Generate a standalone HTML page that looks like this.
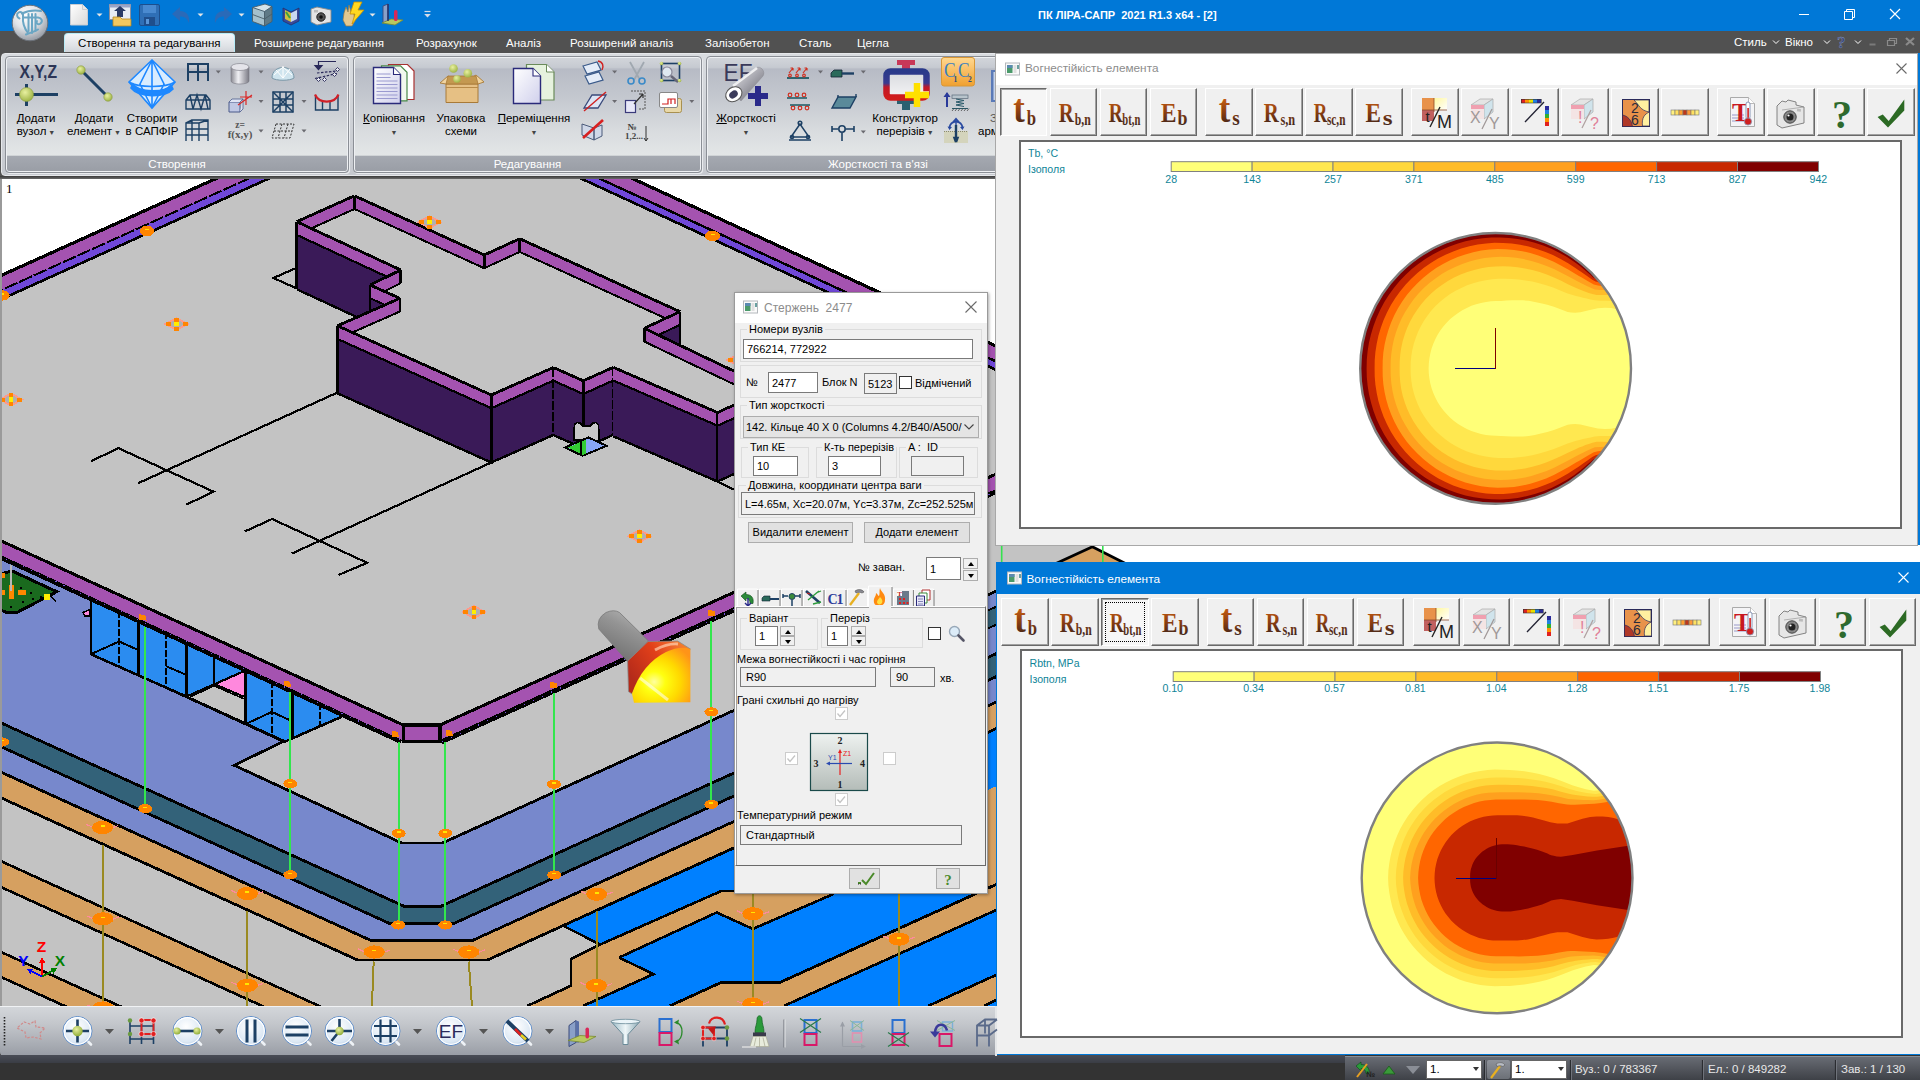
<!DOCTYPE html>
<html lang="uk"><head><meta charset="utf-8"><title>ПК ЛІРА-САПР 2021</title>
<style>
*{box-sizing:border-box;margin:0;padding:0}
html,body{width:1920px;height:1080px;overflow:hidden;background:#333;font-family:"Liberation Sans",sans-serif;font-size:11px;color:#000}
.a{position:absolute}
.t{position:absolute;white-space:pre;line-height:1}
#title{left:0;top:0;width:1920px;height:31px;background:#0078d7}
#tabs{left:0;top:31px;width:1920px;height:22px;background:#515151}
#tabs .t{color:#fff;font-size:11.5px;top:7px}
#ribbon{left:0;top:52px;width:1920px;height:127px;background:#515151}
.grp{position:absolute;top:4px;height:117px;border-radius:4px;border:1px solid #8b8f96;box-shadow:0 0 0 1px #eef0f3 inset, 1px 1px 0 #e9ebee;background:linear-gradient(#d3d6db 0,#c6cad1 9%,#b7bbc5 10.5%,#c4c8cf 35%,#d9dcdf 65%,#e3e6e7 85.5%,#a5a9b1 86%,#999da5 100%)}
.grp .gl{position:absolute;left:0;right:0;bottom:-1px;height:17px;color:#fff;font-size:11.5px;text-align:center;line-height:17px;white-space:pre}
.rl{position:absolute;font-size:11.5px;text-align:center;white-space:pre;line-height:13px;color:#000;transform:translateX(-50%)}
.edit{position:absolute;background:#fff;border:1px solid #7a7a7a;font-size:11px;line-height:1;white-space:pre;padding:0}
.edit span,.ro span{position:absolute;left:3px;top:50%;transform:translateY(-50%)}
.ro{position:absolute;background:#f0f0f0;border:1px solid #7a7a7a;font-size:11px;white-space:pre}
.gb{position:absolute;border:1px solid #dcdcdc}
.gb>b{position:absolute;top:-7px;left:6px;background:#f0f0f0;padding:0 2px;font-weight:normal;font-size:11px;white-space:pre;line-height:13px}
.btn{position:absolute;background:#e1e1e1;border:1px solid #adadad;font-size:11px;text-align:center;white-space:pre}
.cb{position:absolute;width:13px;height:13px;background:#fff;border:1px solid #333}
.cbd{position:absolute;width:13px;height:13px;background:#fff;border:1px solid #ccc}
.spin{position:absolute;width:15px;height:10.5px;background:#f0f0f0;border:1px solid #adadad}
.spin:after{content:"";position:absolute;left:3.5px;top:2.5px;border:3px solid transparent}
.spin.u:after{border-bottom:4px solid #000;border-top:0}
.spin.d:after{border-top:4px solid #000;border-bottom:0}
.tb{position:absolute;width:47.5px;height:48px;background:#f0f0f0;border:1px solid;border-color:#fff #696969 #696969 #fff;box-shadow:inset -1px -1px 0 #a0a0a0}
.tb.p{border-color:#696969 #fff #fff #696969;box-shadow:inset 1px 1px 0 #a0a0a0;background:#f6f6f6}
.tb svg{position:absolute;left:0;top:0}
.win{position:absolute;background:#f0f0f0}
.canvas{position:absolute;background:#fff;border:2px solid #696969;border-right-color:#696969}
.lg{position:absolute;font-size:10.6px;color:#0f8598;white-space:pre;line-height:1}
.lv{position:absolute;font-size:10.6px;color:#0f8598;white-space:pre;line-height:1;transform:translateX(-50%)}
#btb{left:0;top:1007px;width:996px;height:49px;background:linear-gradient(#d3d6da 0,#c3c6cb 35%,#a9adb4 75%,#999da5 100%);border-radius:0 0 0 4px}
#status{left:1345px;top:1056px;width:575px;height:24px;background:linear-gradient(#6a6e76 0,#54575e 50%,#3e4147 100%)}
#status .t{color:#e8e8e8;font-size:11.5px;top:8px}
</style></head><body>
<!-- ===== title bar ===== -->
<div id="title" class="a">
 <div class="t" style="left:1038px;top:9.5px;color:#fff;font-weight:bold;font-size:11px">ПК ЛІРА-САПР  2021 R1.3 x64 - [2]</div>
 <svg class="a" style="left:60px;top:0" width="400" height="31" viewBox="60 0 400 31">
  <defs>
   <linearGradient id="gDoc" x1="0" y1="0" x2="1" y2="1"><stop offset="0" stop-color="#fff"/><stop offset="1" stop-color="#d8d8d8"/></linearGradient>
   <linearGradient id="gBl" x1="0" y1="0" x2="0" y2="1"><stop offset="0" stop-color="#3a80c8"/><stop offset="1" stop-color="#1a5aa8"/></linearGradient>
  </defs>
  <!-- new doc -->
  <path d="M70.5 4.5h12l5 5v15.5h-17z" fill="url(#gDoc)" stroke="#c8ccd2" stroke-width="1"/><path d="M82.5 4.5v5h5" fill="#e8e8e8" stroke="#c0c4ca" stroke-width=".8"/>
  <path d="M96.5 13.5l3 3 3-3z" fill="#e6e6e6"/>
  <!-- open -->
  <rect x="109.500" y="4.500" width="21" height="15" fill="#e8ecf4" stroke="#8a90a0"/><rect x="109.500" y="4.500" width="21" height="3" fill="#9aa4c8"/>
  <path d="M117 17v-6h-3l6-5 6 5h-3v6z" fill="#2a3a66"/>
  <path d="M113 26v-9h7l2 2h9v7z" fill="#f2c860" stroke="#b88820" stroke-width=".8"/>
  <!-- save -->
  <rect x="139.500" y="4.500" width="20" height="21" rx="1.5" fill="#2f6fb6" stroke="#1c4f8e"/><rect x="143" y="5" width="13" height="8" fill="#4a8ad0"/><rect x="144" y="17" width="11" height="8" fill="#1f4e8c"/><rect x="146" y="19" width="3" height="5" fill="#5a96d8"/>
  <!-- undo / redo (dim blue) -->
  <path d="M172 14l8-7v4c7 0 10 5 9 12-2-5-5-7-9-6.5v4.500z" fill="#2a6ab8"/>
  <path d="M197.500 13.500l3 3 3-3z" fill="#e6e6e6"/>
  <path d="M232 14l-8-7v4c-7 0-10 5-9 12 2-5 5-7 9-6.500v4.500z" fill="#2a6ab8"/>
  <path d="M238.500 13.500l3 3 3-3z" fill="#e6e6e6"/>
  <!-- 3d box -->
  <path d="M252.500 7.500l12 4v14.500l-12-4.500z" fill="#a4c0cc"/><path d="M264.500 11.500l7.500-5v15l-7.500 4.500z" fill="#5f7a86"/><path d="M252.500 7.500l12.500-3.500 7 2.500-7.500 5z" fill="#d4e4ea"/><path d="M252.500 7.500l12.500-3.500 7 2.500v15l-7.500 4.500-12-4.500zM252.500 7.500l12 4 7.500-5M264.500 11.500v14.500M252.500 14.500l12 4.500 7.500-5" fill="none" stroke="#4a5e68" stroke-width=".9"/>
  <!-- book -->
  <path d="M283 8l8 4 8-4v13l-8 4-8-4z" fill="#3a4a9a" stroke="#26306a" stroke-width=".8"/><path d="M285 10l6 3v9l-6-3z" fill="#d0c040"/><path d="M297 10l-6 3v9l6-3z" fill="#c8d8f0"/><path d="M286 12l4 6" stroke="#40a040" stroke-width="2"/>
  <!-- camera -->
  <path d="M311 9l6-2 14 3v12l-14 3-6-3z" fill="#e4e4e4" stroke="#888" stroke-width=".9"/><circle cx="321" cy="17" r="4.200" fill="#555" stroke="#222"/><circle cx="321" cy="17" r="1.800" fill="#111"/><rect x="314" y="10" width="4" height="2.500" fill="#bbb"/>
  <!-- hand + lightning -->
  <path d="M344 13l2-6 2 5 1-7 2 7 2-5 1 8 1 6-3 5h-6l-3-6z" fill="#e2c890" stroke="#9a7a40" stroke-width=".7"/><path d="M354 2h8l-4 8h6l-12 14 3-10h-5z" fill="#ffd820" stroke="#c89000" stroke-width=".8"/>
  <path d="M369.500 13.500l3 3 3-3z" fill="#e6e6e6"/>
  <!-- section icon -->
  <path d="M383 6l5-2v17l-5 2z" fill="#8aa0c8" stroke="#3a4a7a" stroke-width=".9"/><path d="M382 23l9-4 12 1-8 5z" fill="#b8c860" stroke="#7a8a30" stroke-width=".8"/><rect x="394" y="10" width="3.500" height="11" rx="1.500" fill="#d82858"/><path d="M388 4v17" stroke="#26306a" stroke-width="1.500"/>
  <!-- customize -->
  <path d="M424.500 11.500h6" stroke="#d4dcea" stroke-width="1.200"/><path d="M424.200 14l3.300 3.600 3.300-3.600z" fill="#d4dcea"/>
 </svg>
 <!-- window controls -->
 <svg class="a" style="left:1780px;top:0" width="140" height="31"><g stroke="#fff" stroke-width="1" fill="none"><path d="M19 14.500h10"/><path d="M64.500 11.500h8v8h-8zM66.500 11.500v-2h8v8h-2"/><path d="M110 9l10 10M120 9l-10 10" stroke-width="1.200"/></g></svg>
</div>
<!-- ===== tab row ===== -->
<div id="tabs" class="a">
 <div class="a" style="left:64px;top:2px;width:171px;height:21px;border-radius:4px 4px 0 0;background:linear-gradient(#f4f6f8,#dfe2e6 60%,#cdd1d7);border:1px solid #b8ecf8;border-bottom:0"></div>
 <div class="t" style="left:78px;color:#000">Створення та редагування</div>
 <div class="t" style="left:254px">Розширене редагування</div>
 <div class="t" style="left:416px">Розрахунок</div>
 <div class="t" style="left:506px">Аналіз</div>
 <div class="t" style="left:570px">Розширений аналіз</div>
 <div class="t" style="left:705px">Залізобетон</div>
 <div class="t" style="left:799px">Сталь</div>
 <div class="t" style="left:857px">Цегла</div>
 <div class="t" style="left:1734px;top:6px">Стиль</div>
 <div class="t" style="left:1785px;top:6px">Вікно</div>
 <svg class="a" style="left:1768px;top:0" width="152" height="22"><g stroke="#fff" stroke-width="1" fill="none"><path d="M5 9.500l3 3 3-3M56 9.500l3 3 3-3M87 9.500l3 3 3-3"/></g>
  <text x="69" y="17" font-family="Liberation Serif,serif" font-weight="bold" font-size="17" fill="#3a4a7a" stroke="#8a98c0" stroke-width=".4">?</text>
  <path d="M101.500 13.500h6" stroke="#7a7a7a" stroke-width="2"/><path d="M119.500 9.500h7v5h-7zM121.500 9.500v-2h7v5h-2" stroke="#8a8a8a" stroke-width="1.200" fill="none"/><path d="M138 7l8 7M146 7l-8 7" stroke="#8a8a8a" stroke-width="2.200"/></svg>
</div>
<!-- app button -->
<svg class="a" style="left:8px;top:1px" width="46" height="46" viewBox="0 0 46 46">
 <defs><radialGradient id="gApp" cx=".4" cy=".3" r=".8"><stop offset="0" stop-color="#fff"/><stop offset=".45" stop-color="#dfe3e8"/><stop offset="1" stop-color="#848a94"/></radialGradient></defs>
 <circle cx="22" cy="22" r="17.800" fill="url(#gApp)" stroke="#6a7078" stroke-width="1"/>
 <g fill="none" stroke="#6aa6c4" stroke-width="2" stroke-linecap="round">
  <path d="M11.500 17.500c-2.500-1-3.500-4.500-1-6s5 .5 4.500 4c-.5 5 1.500 12 5 16.500"/>
  <path d="M14 12.500c4-2 12-3.500 19-2.500"/>
  <path d="M16.500 16.500h13.500c4 .5 5 4 2.500 6s-5-.5-3.500-2.500"/>
  <path d="M20.500 13v17M24 13v19M27.500 13v17"/>
  <path d="M18 33.500c3-1.500 8-2.500 12-5"/>
 </g>
</svg>
<!-- ===== ribbon ===== -->
<div id="ribbon" class="a">
<div class="a" style="left:1px;top:1px;width:1917px;height:123px;border-radius:4px;background:linear-gradient(#d9dce0,#c6c9cf);border:1px solid #e6e8eb"></div>
<!-- group 1 -->
<div class="grp" style="left:5px;width:344px"><div class="gl">Створення</div></div>
<div class="grp" style="left:353px;width:349px"><div class="gl">Редагування</div></div>
<div class="grp" style="left:706px;width:460px"><div class="gl" style="text-align:left;padding-left:121px">Жорсткості та в'язі</div></div>
<div class="rl" style="left:36px;top:60px">Додати
вузол<span style="font-size:7px;color:#444"> ▼</span></div>
<div class="rl" style="left:94px;top:60px">Додати
елемент<span style="font-size:7px;color:#444"> ▼</span></div>
<div class="rl" style="left:152px;top:60px">Створити
в САПФІР</div>
<div class="rl" style="left:394px;top:60px"><u>К</u>опіювання
<span style="font-size:7px;color:#444">▼</span></div>
<div class="rl" style="left:461px;top:60px">Упаковка
схеми</div>
<div class="rl" style="left:534px;top:60px"><u>П</u>ереміщення
<span style="font-size:7px;color:#444">▼</span></div>
<div class="rl" style="left:746px;top:60px"><u>Ж</u>орсткості
<span style="font-size:7px;color:#444">▼</span></div>
<div class="rl" style="left:905px;top:60px">Конструктор
перерізів<span style="font-size:7px;color:#444"> ▼</span></div>
<div class="t" style="left:990px;top:61px;font-size:11.5px;color:#555">З</div><div class="t" style="left:978px;top:74px;font-size:11.5px">арм</div>
<svg class="a" style="left:0;top:0" width="1000" height="127" viewBox="0 52 1000 127">
<defs>
 <radialGradient id="gGn" cx=".4" cy=".35" r=".7"><stop offset="0" stop-color="#e8f0a0"/><stop offset="1" stop-color="#9ab040"/></radialGradient>
 <linearGradient id="gCyl" x1="0" y1="0" x2="1" y2="0"><stop offset="0" stop-color="#8a8a92"/><stop offset=".4" stop-color="#f0f0f4"/><stop offset="1" stop-color="#7a7a84"/></linearGradient>
 <linearGradient id="gPap" x1="0" y1="0" x2="1" y2="1"><stop offset="0" stop-color="#fff"/><stop offset="1" stop-color="#d0d0ec"/></linearGradient>
 <linearGradient id="gPipe" x1="0" y1="0" x2="1" y2="1"><stop offset="0" stop-color="#f4f4f4"/><stop offset=".5" stop-color="#a8a8b0"/><stop offset="1" stop-color="#606068"/></linearGradient>
 <linearGradient id="gCC" x1="0" y1="0" x2="0" y2="1"><stop offset="0" stop-color="#ffd890"/><stop offset="1" stop-color="#f0a030"/></linearGradient>
</defs>
<g fill="#6a6a70"><path d="M215.8 70.5l2.5 3 2.5-3z"/><path d="M258.5 70.5l2.5 3 2.5-3z"/><path d="M258.5 100.0l2.5 3 2.5-3z"/><path d="M301.5 100.0l2.5 3 2.5-3z"/><path d="M258.5 129.5l2.5 3 2.5-3z"/><path d="M301.5 129.5l2.5 3 2.5-3z"/></g>
<!-- Add node -->
<text x="19.500" y="77.500" font-size="18" font-weight="bold" fill="#2c3556" font-family="Liberation Sans,sans-serif" textLength="37.500" lengthAdjust="spacingAndGlyphs">X,Y,Z</text>
<path d="M15 94.500h43M26.500 84v22" stroke="#1d4064" stroke-width="3"/><circle cx="26.500" cy="94.500" r="7" fill="url(#gGn)" stroke="#8a9a40" stroke-width=".6"/>
<!-- Add element -->
<path d="M81 70l27 27" stroke="#1d4064" stroke-width="3"/><circle cx="81" cy="70" r="4.200" fill="url(#gGn)" stroke="#8a9a40" stroke-width=".6"/><circle cx="108" cy="97" r="4.200" fill="url(#gGn)" stroke="#8a9a40" stroke-width=".6"/>
<!-- Sapfir diamond -->
<g stroke="#1e88ff" stroke-width="1.600" fill="none"><path d="M152 60l-23 22 23 26 23-26z" fill="#d8ecff"/><path d="M152 60l-12 24 12 24M152 60l12 24-12 24M152 60v48M129 82c10 6 36 6 46 0M133 86c8 8 30 8 38 0" /><path d="M133 84c6 9 32 9 38 1l2 4c-8 9-34 9-42-1z" fill="#1e88ff"/></g>
<!-- col 1 small -->
<g stroke="#1d4064" stroke-width="2" fill="none"><path d="M188 81v-17h20v17M188 72h20M198 64v17"/></g>
<g stroke="#1d4064" stroke-width="1.400" fill="none"><path d="M186 109v-9l4-5h16l4 5v9zM186 100h24M190 95l3 14 4-14 4 14 4-14 3 14"/></g>
<g stroke="#1d4064" stroke-width="1.400" fill="none"><path d="M186 141v-18h13v18M192 141v-21h16v21M186 129h22M186 135h22M199 123l9-3M186 123l6-3"/></g>
<!-- col 2 -->
<path d="M231 67v14c0 4 18 4 18 0v-14" fill="url(#gCyl)" stroke="#7a7a84" stroke-width=".6"/><ellipse cx="240" cy="67" rx="9" ry="3.500" fill="#e4e4ea" stroke="#7a7a84" stroke-width=".6"/>
<path d="M229 102h11v10h-11z" fill="#c0c8e4" stroke="#4a5a8a" stroke-width="1"/><path d="M229 102l3-3h11l-3 3M240 112l3-3v-10" fill="#e0e4f4" stroke="#4a5a8a" stroke-width=".8"/><path d="M246 91v14M240 97h12M238 105l14-10" stroke="#d82828" stroke-width="1.200"/>
<text x="240" y="128" font-family="Liberation Serif,serif" font-weight="bold" font-size="9.500" fill="#555" text-anchor="middle">z=</text><text x="240" y="138" font-family="Liberation Serif,serif" font-weight="bold" font-size="11" fill="#555" text-anchor="middle">f(x,y)</text>
<!-- col 3 -->
<path d="M272 78c0-14 22-14 22 0c-4 3-18 3-22 0z" fill="#cfe4ee" stroke="#7a98a8" stroke-width="1"/><path d="M276 70l7 8 7-9M283 66v12M274 75l9-8 9 8" stroke="#fff" stroke-width="1" fill="none"/>
<g stroke="#1d4064" stroke-width="1.500" fill="none"><rect x="273" y="92" width="20" height="20"/><path d="M273 99h20M273 105h20M280 92v20M286 92v20M273 92l20 20M293 92l-20 20"/></g>
<g stroke="#333" stroke-width="1" fill="none" stroke-dasharray="2 1.500"><path d="M276 124h18l-4 14h-18zM282 124l-4 14M288 124l-4 14M274 131h18"/></g>
<!-- col 4 -->
<g stroke="#2a2a5a" stroke-width="1.200" fill="none"><path d="M336 61.500h-17.500v6"/><path d="M315 65.500h7l-3.500 4z" fill="#2a2a5a"/><path d="M317 73l20-2M315 78.500l22-5" stroke-dasharray="2.500 1.500"/><path d="M316.500 79.500l2-2 2 2-2 2zM322.500 79.500l2-2 2 2-2 2zM332.500 74.500l2-2 2 2-2 2zM335.500 69.500l2-2 2 2-2 2z" fill="#e8eaf0" stroke-width=".9"/></g>
<path d="M315.500 96v14h22.500v-14M322.500 101v9M330 101v9" stroke="#1d4064" stroke-width="1.400" fill="none"/><path d="M315 94.500c4 9.500 19.500 9.500 23.500 0" stroke="#d02028" stroke-width="2.200" fill="none"/>
<!-- group 2: copy -->
<path d="M388.500 64.500h19l6.500 6.500v28.500h-25.500z" fill="#fff" stroke="#a83030" stroke-width="1.200"/><path d="M381.500 65.800h19l6.500 6.500v28.500h-25.500z" fill="#f2f8ee" stroke="#4a8a4a" stroke-width="1.200"/><path d="M373.500 67.500h20l7 7v29h-27z" fill="url(#gPap)" stroke="#2a2a7a" stroke-width="1.400"/><path d="M393.500 67.500v7h7" fill="#fff" stroke="#2a2a7a" stroke-width="1.100"/><path d="M376.500 74h14M376.500 77.500h14M376.500 81h21M376.500 84.500h21M376.500 88h21M376.500 91.500h21M376.500 95h21M376.500 98.500h21" stroke="#9a9ad0" stroke-width="1"/>
<!-- pack -->
<path d="M446 84h32v18.500h-32z" fill="#e6c084" stroke="#a87a38" stroke-width="1"/><path d="M446 84l-6-1 8-7 5 3zM478 84l6-2-8-7-5 3z" fill="#f0d4a0" stroke="#a87a38" stroke-width=".9"/><path d="M448 76h28l2 8h-32z" fill="#c49850" stroke="#a87a38" stroke-width=".8"/><path d="M446 87.500h32" stroke="#b88a48" stroke-width="1"/><circle cx="453.500" cy="68.500" r="4.300" fill="url(#gGn)"/><circle cx="467.800" cy="73.200" r="4.300" fill="url(#gGn)"/><circle cx="457" cy="79" r="3.800" fill="url(#gGn)"/>
<!-- move -->
<path d="M526.500 64.500h20l7.500 7.500v28h-27.500z" fill="#e6f2de" stroke="#6a8a5a" stroke-width="1.200"/><path d="M546.500 64.500v7.500h7.500" fill="#fff" stroke="#6a8a5a" stroke-width="1"/><path d="M513.500 68.500h19.500l7.500 7.500v27.500h-27z" fill="url(#gPap)" stroke="#2a2a7a" stroke-width="1.400"/><path d="M533 68.500v7.500h7.500" fill="#fff" stroke="#2a2a7a" stroke-width="1.100"/>
<!-- small icons group 2 -->
<g fill="#6a6a70"><path d="M612.1 70.5l2.5 3 2.5-3z"/><path d="M612.1 100.1l2.5 3 2.5-3z"/><path d="M689.3 100.1l2.5 3 2.5-3z"/></g>
<path d="M583 66l14-4 4 8-14 4zM585 76l14-4 4 8-14 4z" fill="#e4ecf8" stroke="#3a5a8a" stroke-width="1.200"/><path d="M598 61c5 1 6 5 4 9" stroke="#d02020" stroke-width="1.400" fill="none"/>
<path d="M584 108l8-13h14l-8 13z" fill="#dce4f4" stroke="#3a4a7a" stroke-width="1.300"/><path d="M584 111l22-19" stroke="#d02020" stroke-width="1.400"/>
<path d="M582 124l12 4v12l-12-5zM594 128l8-3v11l-8 4z" fill="#d0d8e8" stroke="#4a5a7a" stroke-width="1"/><path d="M583 138l20-18" stroke="#d82020" stroke-width="2.600"/>
<path d="M630 62l10 18M644 62l-10 18" stroke="#a0a8b0" stroke-width="1.800"/><circle cx="631" cy="81" r="3" fill="none" stroke="#3a8ac8" stroke-width="1.600"/><circle cx="642" cy="81" r="3" fill="none" stroke="#3a8ac8" stroke-width="1.600"/>
<rect x="625.500" y="100.500" width="10" height="12" fill="#e8e8f8" stroke="#3a3a7a" stroke-width="1.200"/><path d="M631 91h14v18h-7" fill="none" stroke="#555" stroke-width="1" stroke-dasharray="2 1"/><path d="M634 104l9-10M643 94h-4M643 94v4" stroke="#333" stroke-width="1.200" fill="none"/>
<text x="632" y="130" font-family="Liberation Serif,serif" font-weight="bold" font-size="9" fill="#444" text-anchor="middle">№</text><text x="634" y="139" font-family="Liberation Serif,serif" font-weight="bold" font-size="9" fill="#444" text-anchor="middle">1,2...</text><path d="M646 126v15l-2-3M646 141l2-3" stroke="#333" stroke-width="1" fill="none"/>
<rect x="661.500" y="63.500" width="18" height="17" fill="none" stroke="#1d4064" stroke-width="1.600"/><circle cx="667" cy="72" r="5" fill="#dfe8f0" stroke="#889" stroke-width="1.200"/><path d="M671 76l7 6" stroke="#667" stroke-width="2.400"/><g fill="url(#gGn)"><circle cx="661.500" cy="63.500" r="1.800"/><circle cx="679.500" cy="63.500" r="1.800"/><circle cx="661.500" cy="80.500" r="1.800"/><circle cx="679.500" cy="80.500" r="1.800"/></g>
<rect x="664.500" y="98.500" width="17" height="14" rx="2" fill="#e8d8a8" stroke="#a89050"/><rect x="659.500" y="92.500" width="18" height="15" rx="1.500" fill="#fff" stroke="#888"/><path d="M662 104h6v-5h7v5M671 99v5" stroke="#d02020" stroke-width="1.200" fill="none"/>
<!-- group 3 -->
<text x="723.500" y="81" font-size="24.500" fill="#3a3a5a" font-family="Liberation Sans,sans-serif" textLength="29" lengthAdjust="spacingAndGlyphs">EF</text>
<path d="M729 89l27-21c4-3 10 3 7 8l-22 25z" fill="url(#gPipe)" stroke="#8a8a92" stroke-width=".5"/><path d="M733 86l24-18" stroke="#fff" stroke-width="2.500" opacity=".8"/>
<ellipse cx="733.800" cy="94.200" rx="8.600" ry="7" fill="#fff" stroke="#555" stroke-width="1" transform="rotate(-35 733.800 94.200)"/><ellipse cx="733.500" cy="94.500" rx="4.600" ry="3.500" fill="#3a3a5a" transform="rotate(-35 733.500 94.500)"/>
<path d="M758 86v20M748 96h20" stroke="#2a2a8a" stroke-width="6"/>
<g fill="#6a6a70"><path d="M818.0 70.5l2.5 3 2.5-3z"/><path d="M860.8 70.5l2.5 3 2.5-3z"/><path d="M860.8 130.4l2.5 3 2.5-3z"/></g>
<path d="M787 78h22" stroke="#1d5a64" stroke-width="1.800"/><g stroke="#d03020" stroke-width="1.200" fill="none"><path d="M789 73l4-5M796 73l4-5M803 73l4-5M793 68h-2.500M793 68v2.500M800 68h-2.500M800 68v2.500M807 68h-2.500M807 68v2.500"/><circle cx="790" cy="75.500" r="1.300"/><circle cx="797" cy="75.500" r="1.300"/><circle cx="804" cy="75.500" r="1.300"/></g>
<g stroke="#d03020" stroke-width="1.200" fill="none"><circle cx="790" cy="95" r="1.800"/><circle cx="797" cy="95" r="1.800"/><circle cx="804" cy="95" r="1.800"/><circle cx="793" cy="108" r="1.800"/><circle cx="800" cy="108" r="1.800"/><circle cx="807" cy="108" r="1.800"/><path d="M787 98h20M790 105h20" stroke="#1d5a64" stroke-width="1.600"/></g>
<g stroke="#1d4064" stroke-width="1.500" fill="none"><path d="M800 124l-9 13h18zM789 140h22"/><circle cx="800" cy="123" r="1.800"/><circle cx="792" cy="137" r="1.600"/><circle cx="808" cy="137" r="1.600"/></g>
<path d="M831 73l3-3h8v7h-11z" fill="#2a6a5a" stroke="#123" stroke-width=".8"/><path d="M842 73.500h12" stroke="#1d4064" stroke-width="2.400"/>
<path d="M832 108l6-11h18l-6 11z" fill="#5a8a9a" stroke="#1d4064" stroke-width="1.400"/><path d="M838 97v-2M856 97v-3" stroke="#1d4064" stroke-width="1.400"/>
<g stroke="#1d4064" stroke-width="1.600" fill="none"><path d="M832 129h6M846 129h8M842 133v8M832 126v6M854 126v6"/><circle cx="842" cy="129" r="3.200"/></g>
<!-- constructor -->
<defs><linearGradient id="gCon" x1="0" y1="0" x2="0" y2="1"><stop offset="0" stop-color="#2a3a8a"/><stop offset=".45" stop-color="#3a3a90"/><stop offset=".6" stop-color="#c01828"/><stop offset="1" stop-color="#d01c1c"/></linearGradient>
<linearGradient id="gCon2" x1="0" y1="0" x2="0" y2="1"><stop offset="0" stop-color="#d8dade"/><stop offset="1" stop-color="#f4f4f6"/></linearGradient></defs>
<path d="M897 60h18v5h-5v6h-8v-6h-5z" fill="#c83858"/><path d="M897 100h18v4h-5v6h-8v-6h-5z" fill="#2a6070"/>
<rect x="886.500" y="71.500" width="40" height="26" rx="4" fill="url(#gCon2)" stroke="url(#gCon)" stroke-width="6.500"/>
<path d="M917 83v24M905 95h24" stroke="#ffe000" stroke-width="6.500"/><path d="M920.500 83v8.500h8.500" stroke="#fff8a0" stroke-width="1" fill="none" opacity=".7"/>
<!-- CC -->
<rect x="941.500" y="57.500" width="33" height="28.500" rx="2.500" fill="url(#gCC)" stroke="#d89838"/>
<text x="944" y="77" font-family="Liberation Serif,serif" font-size="21" fill="#3a80c0" textLength="11.500" lengthAdjust="spacingAndGlyphs">C</text><text x="958" y="77" font-family="Liberation Serif,serif" font-size="21" fill="#3a80c0" textLength="11.500" lengthAdjust="spacingAndGlyphs">C</text>
<text x="953.500" y="82" font-family="Liberation Serif,serif" font-weight="bold" font-size="7.500" fill="#2a4a80">1</text><text x="968" y="82" font-family="Liberation Serif,serif" font-weight="bold" font-size="7.500" fill="#2a4a80">2</text>
<path d="M947 93v14" stroke="#2a3a9a" stroke-width="2"/><path d="M943.500 97l3.500-5 3.500 5z" fill="#2a3a9a"/><rect x="952" y="95" width="16" height="3.500" fill="#b8c4cc" stroke="#5a6a7a" stroke-width=".7"/><path d="M956 99l8 1.500-8 1.500 8 1.500-8 1.500 8 1.500M952 108.500h16" stroke="#2a5a6a" stroke-width="1" fill="none"/><path d="M952 111l2-2.500M955 111l2-2.500M958 111l2-2.500M961 111l2-2.500M964 111l2-2.500M967 111l2-2.500" stroke="#333" stroke-width=".7"/>
<rect x="944" y="131" width="24" height="12" fill="#d4d4bc"/><path d="M944 131.500h24" stroke="#8a8a70" stroke-width="1" stroke-dasharray="1 1"/><path d="M956 125v17l-1.500-4h3l-1.500 4" stroke="#1d4064" stroke-width="2.400" fill="none"/><path d="M949.500 128a6.500 6.500 0 0 1 13 0" stroke="#2a4aa0" stroke-width="1.800" fill="none"/><path d="M947.500 126.500l2 3.500 2.500-3zM964.500 126.500l-2 3.500-2.500-3z" fill="#2a4aa0"/><path d="M956 119v6M953.500 121.500l2.500-3 2.500 3" stroke="#2a4aa0" stroke-width="1.400" fill="none"/>
<rect x="991" y="70" width="4" height="32" fill="#5a7ab8"/><rect x="993.500" y="72" width="1.500" height="28" fill="#c8d4e8"/>
</svg>
</div>
<div class="a" style="left:0;top:176px;width:1920px;height:3px;background:linear-gradient(#3a3a3a,#6a6a6a)"></div>
<!-- ===== 3D viewport ===== -->
<div class="a" style="left:0;top:179px;width:1920px;height:828px;background:#fff"></div>
<div class="a" style="left:0;top:179px;width:2px;height:828px;background:#9a9a9a"></div>
<svg class="a" style="left:2px;top:179px" width="994" height="827" viewBox="2 179 994 827" shape-rendering="crispEdges">
<rect x="0" y="170" width="1000" height="840" fill="#fff"/>
<polygon points="-10.0,500.0 1010.0,500.0 1010.0,1010.0 -10.0,1010.0" fill="#c3c3c3" stroke="none" stroke-width="0" />
<polygon points="-10.0,856.2 800.0,1224.8 800.0,1250.7 -10.0,882.1" fill="#d6a060" stroke="none" stroke-width="0" />
<polyline points="-10.0,856.2 800.0,1224.8" fill="none" stroke="#000" stroke-width="2.6" />
<polyline points="-10.0,882.1 800.0,1250.7" fill="none" stroke="#000" stroke-width="2.6" />
<polygon points="-10.0,947.0 800.0,1315.6 800.0,1340.6 -10.0,972.0" fill="#d6a060" stroke="none" stroke-width="0" />
<polyline points="-10.0,947.0 800.0,1315.6" fill="none" stroke="#000" stroke-width="2.6" />
<polyline points="-10.0,972.0 800.0,1340.6" fill="none" stroke="#000" stroke-width="2.6" />
<polygon points="563.3,925.8 1010.0,722.0 1010.0,1010.0 520.0,1010.0 527.5,1005.8 570.8,985.8 570.8,959.2 600.0,944.6" fill="#0080ff" stroke="none" stroke-width="0" />
<polygon points="600.0,944.6 721.7,890.8 1010.0,890.8 1010.0,780.0 900.0,830.0 833.8,893.9 752.8,928.9 716.7,912.5 619.2,957.5 653.3,974.2 583.3,1005.8 527.5,1005.8 570.8,985.8 570.8,959.2" fill="#d6a060" stroke="none" stroke-width="0" />
<polygon points="670.0,1005.8 721.7,982.2 780.5,982.2 1010.0,878.2 1010.0,903.8 784.2,1005.8" fill="#d6a060" stroke="none" stroke-width="0" />
<polygon points="928.5,1005.8 1010.0,968.6 1010.0,993.4 984.0,1005.8" fill="#d6a060" stroke="none" stroke-width="0" />
<polyline points="563.3,925.8 600.0,944.6" fill="none" stroke="#000" stroke-width="2.4" />
<polyline points="600.0,944.6 721.7,890.8 760.0,890.8" fill="none" stroke="#000" stroke-width="2.6" />
<polyline points="619.2,957.5 716.7,912.5 752.8,928.9 833.8,893.9" fill="none" stroke="#000" stroke-width="2.6" />
<polyline points="619.2,957.5 653.3,974.2 583.3,1005.8" fill="none" stroke="#000" stroke-width="2.6" />
<polyline points="600.0,944.6 570.8,959.2 570.8,985.8 527.5,1005.8" fill="none" stroke="#000" stroke-width="2.6" />
<polyline points="670.0,1005.8 721.7,982.2 780.5,982.2 1010.0,878.2" fill="none" stroke="#000" stroke-width="2.8" />
<polyline points="784.2,1005.8 1010.0,903.8" fill="none" stroke="#000" stroke-width="2.6" />
<polyline points="928.5,1005.8 1010.0,968.6" fill="none" stroke="#000" stroke-width="2.6" />
<polyline points="984.0,1005.8 1010.0,993.4" fill="none" stroke="#000" stroke-width="2.6" />
<polygon points="-10.0,792.8 357.5,960.0 487.5,960.0 1010.0,722.3 1010.0,300.0 -10.0,300.0" fill="#d6a060" stroke="none" stroke-width="0" />
<polygon points="-10.0,767.1 371.7,940.8 471.7,940.8 1010.0,695.9 1010.0,300.0 -10.0,300.0" fill="#7788cc" stroke="none" stroke-width="0" />
<polygon points="-10.0,741.7 389.2,923.3 454.2,923.3 1010.0,670.4 1010.0,300.0 -10.0,300.0" fill="#336279" stroke="none" stroke-width="0" />
<polygon points="-10.0,717.9 405.0,906.7 440.0,906.7 1010.0,647.4 1010.0,300.0 -10.0,300.0" fill="#7788cc" stroke="none" stroke-width="0" />
<polyline points="-10.0,792.8 357.5,960.0 487.5,960.0 1010.0,722.3" fill="none" stroke="#000" stroke-width="2.8" />
<polyline points="-10.0,767.1 371.7,940.8 471.7,940.8 1010.0,695.9" fill="none" stroke="#000" stroke-width="2.8" />
<polyline points="-10.0,741.7 389.2,923.3 454.2,923.3 1010.0,670.4" fill="none" stroke="#000" stroke-width="2.8" />
<polyline points="-10.0,717.9 405.0,906.7 440.0,906.7 1010.0,647.4" fill="none" stroke="#000" stroke-width="2.8" />
<polygon points="100.0,657.4 283.3,741.5 234.2,765.3 401.7,843.0 442.5,843.0 1010.0,584.8 1010.0,400.0 100.0,400.0" fill="#c3c3c3" stroke="none" stroke-width="0" />
<polyline points="100.0,657.4 283.3,741.5" fill="none" stroke="#000" stroke-width="2.4" />
<polyline points="283.3,741.5 234.2,765.3 401.7,843.0 442.5,843.0 1010.0,584.8" fill="none" stroke="#000" stroke-width="2.8" />
<polygon points="980.0,614.0 1000.0,605.0 1000.0,623.0 980.0,632.0" fill="#336279" stroke="none" stroke-width="0" />
<polyline points="980.0,614.0 1000.0,605.0" fill="none" stroke="#000" stroke-width="2" />
<polyline points="980.0,632.0 1000.0,623.0" fill="none" stroke="#000" stroke-width="2" />
<polygon points="-2.0,575.0 11.7,570.8 56.7,591.7 17.0,612.5 8.0,613.0 -2.0,609.0" fill="#1a6a1e" stroke="#000" stroke-width="3" />
<rect x="10.0" y="583.0" width="2" height="2" fill="#000"/>
<rect x="20.0" y="587.0" width="2" height="2" fill="#000"/>
<rect x="30.0" y="592.0" width="2" height="2" fill="#000"/>
<rect x="40.0" y="596.0" width="2" height="2" fill="#000"/>
<rect x="12.0" y="596.0" width="2" height="2" fill="#000"/>
<rect x="22.0" y="601.0" width="2" height="2" fill="#000"/>
<rect x="32.0" y="598.0" width="2" height="2" fill="#000"/>
<rect x="10.0" y="606.0" width="2" height="2" fill="#000"/>
<rect x="20.0" y="609.0" width="2" height="2" fill="#000"/>
<rect x="9" y="585" width="4.5" height="14" fill="#ff8800"/>
<rect x="18" y="590" width="8" height="5" fill="#ff8800"/>
<rect x="2" y="590" width="3" height="5" fill="#ff8800"/>
<rect x="2" y="573" width="2.5" height="5" fill="#ff8800"/>
<rect x="10" y="565" width="2" height="26" fill="#b8b8b8"/>
<polyline points="50.0,596.0 56.0,601.0" fill="none" stroke="#000" stroke-width="1.5" />
<rect x="44" y="594" width="6" height="6" fill="#ffee00"/>
<polygon points="90.8,598.1 245.6,668.9 245.6,671.3 186.3,696.6 90.8,654.2" fill="#2b8cf0" stroke="none" stroke-width="0" />
<polygon points="215.0,684.4 243.8,672.5 243.8,696.6" fill="#ff88dd" stroke="none" stroke-width="0" />
<polygon points="190.0,696.9 213.8,685.6 243.8,698.8 245.6,723.6" fill="#c3c3c3" stroke="none" stroke-width="0" />
<polygon points="245.6,668.9 341.3,712.7 341.3,716.9 285.0,741.6 245.6,723.6" fill="#2b8cf0" stroke="none" stroke-width="0" />
<polyline points="90.8,597.1 90.8,654.2 186.3,696.6 245.6,723.6 285.0,741.6 341.3,716.9" fill="none" stroke="#000" stroke-width="2.6" />
<polyline points="138.3,619.9 138.3,676.0" fill="none" stroke="#000" stroke-width="2.6" />
<polyline points="186.7,642.0 186.7,696.6" fill="none" stroke="#000" stroke-width="2.6" />
<polyline points="213.8,654.4 213.8,685.0" fill="none" stroke="#000" stroke-width="2.6" />
<polyline points="245.6,668.9 245.6,723.6" fill="none" stroke="#000" stroke-width="2.6" />
<polyline points="292.5,690.4 292.5,738.0" fill="none" stroke="#000" stroke-width="2.6" />
<polyline points="119.2,611.1 119.2,667.0" fill="none" stroke="#000" stroke-width="1.6" stroke-dasharray="7 2"/>
<polyline points="165.8,632.4 165.8,688.0" fill="none" stroke="#000" stroke-width="1.6" stroke-dasharray="7 2"/>
<polyline points="271.9,681.0 271.9,735.5" fill="none" stroke="#000" stroke-width="1.6" stroke-dasharray="7 2"/>
<polyline points="320.0,703.0 320.0,726.0" fill="none" stroke="#000" stroke-width="1.6" stroke-dasharray="7 2"/>
<polyline points="90.8,654.2 119.2,641.5 138.3,650.0" fill="none" stroke="#000" stroke-width="2" />
<polyline points="165.8,666.0 186.7,675.0" fill="none" stroke="#000" stroke-width="2" />
<polyline points="186.3,696.6 243.8,671.3" fill="none" stroke="#000" stroke-width="2.2" />
<polyline points="215.0,684.4 243.8,696.6" fill="none" stroke="#000" stroke-width="2" />
<polyline points="190.0,696.9 213.8,685.6" fill="none" stroke="#000" stroke-width="2" />
<polyline points="246.3,723.8 271.9,711.9 289.4,720.0" fill="none" stroke="#000" stroke-width="2" />
<polyline points="243.8,698.8 213.8,685.6" fill="none" stroke="#000" stroke-width="1.6" />
<polygon points="83.0,612.5 90.0,609.5 90.0,616.0 85.0,616.0" fill="#ff88dd" stroke="#000" stroke-width="1.5" />
<polygon points="-10.0,304.3 267.0,178.5 267.0,170.0 581.0,170.0 581.0,178.5 1110.0,422.5 440.0,725.0 403.3,725.0 -10.0,536.0" fill="#c3c3c3" stroke="none" stroke-width="0" />
<polygon points="-10.0,170.0 1130.0,170.0 1130.0,408.0 632.8,178.7 215.7,178.7 -10.0,280.5" fill="#fff" stroke="none" stroke-width="0" />
<polygon points="-10.0,280.5 260.0,158.7 290.0,159.9 -10.0,295.2" fill="#a453b0" stroke="none" stroke-width="0" />
<polygon points="-10.0,295.2 290.0,159.9 310.0,160.0 -10.0,304.3" fill="#7048d8" stroke="none" stroke-width="0" />
<polyline points="-10.0,280.5 260.0,158.7" fill="none" stroke="#000" stroke-width="3.2" />
<polyline points="-10.0,295.2 290.0,159.9" fill="none" stroke="#000" stroke-width="2.0" stroke-dasharray="14 2"/>
<polyline points="-10.0,304.3 310.0,160.0" fill="none" stroke="#000" stroke-width="2.6" />
<polygon points="560.0,168.8 1130.0,431.7 1130.0,423.2 560.0,160.3" fill="#7048d8" stroke="none" stroke-width="0" />
<polygon points="560.0,160.3 1130.0,423.2 1130.0,408.0 560.0,145.1" fill="#a453b0" stroke="none" stroke-width="0" />
<polyline points="560.0,168.8 1130.0,431.7" fill="none" stroke="#000" stroke-width="2.6" />
<polyline points="560.0,160.3 1130.0,423.2" fill="none" stroke="#000" stroke-width="2.4" />
<polyline points="560.0,145.1 1130.0,408.0" fill="none" stroke="#000" stroke-width="3.2" />
<polygon points="-10.0,535.8 403.3,725.0 403.3,741.7 400.0,740.8 -10.0,552.0" fill="#a453b0" stroke="none" stroke-width="0" />
<polyline points="-10.0,535.8 403.3,725.0" fill="none" stroke="#000" stroke-width="3.0" />
<polyline points="-10.0,552.6 401.0,741.8" fill="none" stroke="#000" stroke-width="4.4" />
<polyline points="-10.0,551.4 401.0,740.6" fill="none" stroke="#7a58e0" stroke-width="1" stroke-dasharray="1 8"/>
<polygon points="440.0,725.0 1112.0,421.7 1112.0,438.8 441.7,741.3 440.0,741.7" fill="#a453b0" stroke="none" stroke-width="0" />
<polyline points="440.0,725.0 1112.0,421.7" fill="none" stroke="#000" stroke-width="3.0" />
<polyline points="441.7,741.8 1112.0,439.3" fill="none" stroke="#000" stroke-width="4.8" />
<polyline points="441.7,741.6 1112.0,439.1" fill="none" stroke="#7a58e0" stroke-width="1" stroke-dasharray="1 9"/>
<polygon points="403.3,725.0 440.0,725.0 440.0,741.7 403.3,741.7" fill="#a453b0" stroke="#000" stroke-width="3.2" />
<polyline points="337.5,392.5 138.0,483.3" fill="none" stroke="#000" stroke-width="2.2" />
<polyline points="91.0,461.2 118.5,448.2 213.5,491.7 186.2,504.7" fill="none" stroke="#000" stroke-width="2.2" />
<polyline points="491.3,462.5 291.7,553.6" fill="none" stroke="#000" stroke-width="2.2" />
<polyline points="244.8,531.5 272.1,519.0 367.2,562.8 338.5,575.0" fill="none" stroke="#000" stroke-width="2.2" />
<polyline points="296.9,267.7 273.4,278.0 296.9,288.5" fill="none" stroke="#000" stroke-width="2.2" />
<polyline points="717.5,481.7 740.0,492.3" fill="none" stroke="#000" stroke-width="2.2" />
<polygon points="296.7,234.9 400.8,283.2 400.8,337.5 296.7,289.2" fill="#3a1a58" stroke="none" stroke-width="0" />
<polygon points="296.7,221.7 400.8,270.0 400.8,283.2 296.7,234.9" fill="#a453b0" stroke="none" stroke-width="0" />
<polyline points="296.7,234.9 400.8,283.2" fill="none" stroke="#000" stroke-width="2.2" />
<polyline points="296.7,289.2 400.8,337.5" fill="none" stroke="#000" stroke-width="2.4" />
<polyline points="296.7,221.7 400.8,270.0" fill="none" stroke="#000" stroke-width="2.8" />
<polyline points="296.7,221.7 296.7,289.2" fill="none" stroke="#000" stroke-width="2.8" />
<polygon points="296.7,221.7 354.5,195.8 484.2,255.0 519.7,238.7 680.0,311.7 644.2,328.3 760.0,383.5 760.0,393.0 717.5,412.5 613.3,367.3 583.3,380.8 553.3,367.5 491.3,395.0 337.5,325.8 400.0,298.3 370.0,285.0 400.8,270.0" fill="#c3c3c3" stroke="none" stroke-width="0" />
<polygon points="296.7,221.7 354.5,195.8 354.5,209.0 311.2,228.4" fill="#a453b0" stroke="none" stroke-width="0" />
<polyline points="311.2,228.4 354.5,209.0" fill="none" stroke="#000" stroke-width="2.0" />
<polyline points="296.7,221.7 354.5,195.8" fill="none" stroke="#000" stroke-width="2.8" />
<polygon points="354.5,195.8 484.2,255.0 484.2,268.2 354.5,209.0" fill="#a453b0" stroke="none" stroke-width="0" />
<polyline points="354.5,209.0 484.2,268.2" fill="none" stroke="#000" stroke-width="2.0" />
<polyline points="354.5,195.8 484.2,255.0" fill="none" stroke="#000" stroke-width="2.8" />
<polygon points="484.2,255.0 519.7,238.7 519.7,251.9 484.2,268.2" fill="#a453b0" stroke="none" stroke-width="0" />
<polyline points="484.2,268.2 519.7,251.9" fill="none" stroke="#000" stroke-width="2.0" />
<polyline points="484.2,255.0 519.7,238.7" fill="none" stroke="#000" stroke-width="2.8" />
<polygon points="519.7,238.7 680.0,311.7 680.0,324.9 519.7,251.9" fill="#a453b0" stroke="none" stroke-width="0" />
<polyline points="519.7,251.9 680.0,324.9" fill="none" stroke="#000" stroke-width="2.0" />
<polyline points="519.7,238.7 680.0,311.7" fill="none" stroke="#000" stroke-width="2.8" />
<polyline points="296.7,221.7 400.8,270.0" fill="none" stroke="#000" stroke-width="2.8" />
<polyline points="354.5,195.8 354.5,209.0" fill="none" stroke="#000" stroke-width="2.6" />
<polyline points="484.2,255.0 484.2,268.2" fill="none" stroke="#000" stroke-width="2.6" />
<polyline points="519.7,238.7 519.7,251.9" fill="none" stroke="#000" stroke-width="2.6" />
<polygon points="660.8,335.0 680.0,325.8 680.0,344.5" fill="#3a1a58" stroke="none" stroke-width="0" />
<polygon points="644.2,328.3 680.0,311.7 680.0,324.9 644.2,341.5" fill="#a453b0" stroke="none" stroke-width="0" />
<polyline points="644.2,341.5 680.0,324.9" fill="none" stroke="#000" stroke-width="2.0" />
<polyline points="644.2,328.3 680.0,311.7" fill="none" stroke="#000" stroke-width="2.8" />
<polyline points="680.0,311.7 680.0,344.5" fill="none" stroke="#000" stroke-width="2.8" />
<polygon points="644.2,328.3 760.0,383.5 760.0,396.7 644.2,341.5" fill="#a453b0" stroke="none" stroke-width="0" />
<polyline points="644.2,341.5 760.0,396.7" fill="none" stroke="#000" stroke-width="2.0" />
<polyline points="644.2,328.3 760.0,383.5" fill="none" stroke="#000" stroke-width="2.8" />
<polyline points="644.2,328.3 644.2,341.5" fill="none" stroke="#000" stroke-width="2.8" />
<polygon points="370.0,285.0 400.8,270.0 400.8,283.2 370.0,298.2" fill="#a453b0" stroke="none" stroke-width="0" />
<polyline points="370.0,298.2 400.8,283.2" fill="none" stroke="#000" stroke-width="2.0" />
<polyline points="370.0,285.0 400.8,270.0" fill="none" stroke="#000" stroke-width="2.8" />
<polyline points="400.8,270.0 400.8,283.2" fill="none" stroke="#000" stroke-width="2.8" />
<polygon points="370.0,298.2 385.0,304.9 370.0,311.5" fill="#3a1a58" stroke="none" stroke-width="0" />
<polygon points="370.0,285.0 400.0,298.3 400.0,311.5 370.0,298.2" fill="#a453b0" stroke="none" stroke-width="0" />
<polyline points="370.0,298.2 400.0,311.5" fill="none" stroke="#000" stroke-width="2.0" />
<polyline points="370.0,285.0 400.0,298.3" fill="none" stroke="#000" stroke-width="2.8" />
<polyline points="370.0,285.0 370.0,311.5" fill="none" stroke="#000" stroke-width="2.8" />
<polygon points="337.5,325.8 400.0,298.3 400.0,311.5 337.5,339.0" fill="#a453b0" stroke="none" stroke-width="0" />
<polyline points="337.5,339.0 400.0,311.5" fill="none" stroke="#000" stroke-width="2.0" />
<polyline points="337.5,325.8 400.0,298.3" fill="none" stroke="#000" stroke-width="2.8" />
<polyline points="400.0,298.3 400.0,311.5" fill="none" stroke="#000" stroke-width="2.8" />
<polygon points="337.5,339.0 491.3,408.2 491.3,462.5 337.5,393.3" fill="#3a1a58" stroke="none" stroke-width="0" />
<polygon points="337.5,325.8 491.3,395.0 491.3,408.2 337.5,339.0" fill="#a453b0" stroke="none" stroke-width="0" />
<polyline points="337.5,339.0 491.3,408.2" fill="none" stroke="#000" stroke-width="2.2" />
<polyline points="337.5,393.3 491.3,462.5" fill="none" stroke="#000" stroke-width="2.4" />
<polyline points="337.5,325.8 491.3,395.0" fill="none" stroke="#000" stroke-width="2.8" />
<polyline points="337.5,325.8 337.5,393.3" fill="none" stroke="#000" stroke-width="2.8" />
<polygon points="491.3,408.2 553.3,380.7 553.3,435.0 491.3,462.5" fill="#3a1a58" stroke="none" stroke-width="0" />
<polygon points="491.3,395.0 553.3,367.5 553.3,380.7 491.3,408.2" fill="#a453b0" stroke="none" stroke-width="0" />
<polyline points="491.3,408.2 553.3,380.7" fill="none" stroke="#000" stroke-width="2.2" />
<polyline points="491.3,462.5 553.3,435.0" fill="none" stroke="#000" stroke-width="2.4" />
<polyline points="491.3,395.0 553.3,367.5" fill="none" stroke="#000" stroke-width="2.8" />
<polyline points="491.3,395.0 491.3,463.5" fill="none" stroke="#000" stroke-width="3.0" />
<polygon points="553.3,380.7 583.3,394.0 583.3,448.3 553.3,435.0" fill="#3a1a58" stroke="none" stroke-width="0" />
<polygon points="553.3,367.5 583.3,380.8 583.3,394.0 553.3,380.7" fill="#a453b0" stroke="none" stroke-width="0" />
<polyline points="553.3,380.7 583.3,394.0" fill="none" stroke="#000" stroke-width="2.2" />
<polyline points="553.3,435.0 583.3,448.3" fill="none" stroke="#000" stroke-width="2.4" />
<polyline points="553.3,367.5 583.3,380.8" fill="none" stroke="#000" stroke-width="2.8" />
<polyline points="553.3,367.5 553.3,435.0" fill="none" stroke="#000" stroke-width="1.8" stroke-dasharray="9 2"/>
<polygon points="583.3,394.0 613.3,380.5 613.3,434.8 583.3,448.3" fill="#3a1a58" stroke="none" stroke-width="0" />
<polygon points="583.3,380.8 613.3,367.3 613.3,380.5 583.3,394.0" fill="#a453b0" stroke="none" stroke-width="0" />
<polyline points="583.3,394.0 613.3,380.5" fill="none" stroke="#000" stroke-width="2.2" />
<polyline points="583.3,448.3 613.3,434.8" fill="none" stroke="#000" stroke-width="2.4" />
<polyline points="583.3,380.8 613.3,367.3" fill="none" stroke="#000" stroke-width="2.8" />
<polyline points="583.3,380.8 583.3,448.3" fill="none" stroke="#000" stroke-width="2.8" />
<polyline points="613.3,367.3 613.3,436.0" fill="none" stroke="#000" stroke-width="1.8" stroke-dasharray="9 2"/>
<polygon points="613.3,380.5 717.5,425.7 717.5,481.5 613.3,436.3" fill="#3a1a58" stroke="none" stroke-width="0" />
<polygon points="613.3,367.3 717.5,412.5 717.5,425.7 613.3,380.5" fill="#a453b0" stroke="none" stroke-width="0" />
<polyline points="613.3,380.5 717.5,425.7" fill="none" stroke="#000" stroke-width="2.2" />
<polyline points="613.3,436.3 717.5,481.5" fill="none" stroke="#000" stroke-width="2.4" />
<polyline points="613.3,367.3 717.5,412.5" fill="none" stroke="#000" stroke-width="2.8" />
<polyline points="717.5,412.5 717.5,481.7" fill="none" stroke="#000" stroke-width="3.0" />
<polygon points="717.5,425.7 760.0,406.5 760.0,462.3 717.5,481.5" fill="#3a1a58" stroke="none" stroke-width="0" />
<polygon points="717.5,412.5 760.0,393.3 760.0,406.5 717.5,425.7" fill="#a453b0" stroke="none" stroke-width="0" />
<polyline points="717.5,425.7 760.0,406.5" fill="none" stroke="#000" stroke-width="2.2" />
<polyline points="717.5,481.5 760.0,462.3" fill="none" stroke="#000" stroke-width="2.4" />
<polyline points="717.5,412.5 760.0,393.3" fill="none" stroke="#000" stroke-width="2.8" />
<polygon points="574.0,440.0 574.5,424.5 577.0,422.5 580.0,423.0 583.0,426.0 590.0,426.0 593.0,423.0 596.0,422.5 598.5,425.0 599.0,441.0" fill="#c8c8c8" stroke="#000" stroke-width="1.8" />
<polygon points="565.0,447.5 588.3,437.5 606.7,445.8 582.5,455.8" fill="#88a6f6" stroke="#000" stroke-width="2" />
<polygon points="568.0,447.5 586.0,439.5 586.0,453.5 582.5,455.0" fill="#33cc33" stroke="none" stroke-width="0" />
<polyline points="581.0,441.0 581.0,454.5" fill="none" stroke="#000" stroke-width="2.0" />
<line x1="145.0" y1="627.0" x2="145.0" y2="806.0" stroke="#33e64d" stroke-width="2"/>
<line x1="290.3" y1="692.0" x2="290.3" y2="875.0" stroke="#33e64d" stroke-width="2"/>
<line x1="399.0" y1="742.0" x2="399.0" y2="925.0" stroke="#33e64d" stroke-width="2"/>
<line x1="445.2" y1="742.0" x2="445.2" y2="925.0" stroke="#33e64d" stroke-width="2"/>
<line x1="554.0" y1="693.0" x2="554.0" y2="875.0" stroke="#33e64d" stroke-width="2"/>
<line x1="711.4" y1="621.0" x2="711.4" y2="805.0" stroke="#33e64d" stroke-width="2"/>
<line x1="1001.7" y1="540.0" x2="1001.7" y2="566.0" stroke="#33e64d" stroke-width="2"/>
<line x1="102.9" y1="845.0" x2="102.9" y2="1006.0" stroke="#9a8a22" stroke-width="2"/>
<line x1="247.4" y1="911.0" x2="247.4" y2="1006.0" stroke="#9a8a22" stroke-width="2"/>
<line x1="596.5" y1="911.0" x2="596.5" y2="1006.0" stroke="#9a8a22" stroke-width="2"/>
<line x1="752.8" y1="890.0" x2="752.8" y2="1006.0" stroke="#9a8a22" stroke-width="2"/>
<line x1="899.1" y1="890.0" x2="899.1" y2="1006.0" stroke="#9a8a22" stroke-width="2"/>
<polyline points="373.7,961.5 371.9,1006.0" fill="none" stroke="#9a8a22" stroke-width="2" />
<polyline points="468.8,961.5 471.9,1006.0" fill="none" stroke="#9a8a22" stroke-width="2" />
<ellipse cx="147.0" cy="231.0" rx="7.5" ry="5.2" fill="#ff8500"/>
<rect x="145.0" y="228.8" width="4" height="1.6" fill="#ffe600"/>
<ellipse cx="2.0" cy="295.5" rx="7.5" ry="5.2" fill="#ff8500"/>
<rect x="0.0" y="293.3" width="4" height="1.6" fill="#ffe600"/>
<ellipse cx="712.5" cy="235.8" rx="7.5" ry="5.2" fill="#ff8500"/>
<rect x="710.5" y="233.6" width="4" height="1.6" fill="#ffe600"/>
<polygon points="163.5,324.0 176.5,317.0 189.5,324.0 176.5,331.0" fill="#ff9a8a" stroke="none" stroke-width="0" />
<ellipse cx="176.5" cy="324.0" rx="6.5" ry="3.8" fill="#b0b0b0"/>
<rect x="165.5" y="322.0" width="5" height="4" fill="#ff8500"/>
<rect x="182.5" y="322.0" width="5" height="4" fill="#ff8500"/>
<rect x="174.3" y="317.5" width="4.4" height="4" fill="#ff8500"/>
<rect x="174.3" y="326.5" width="4.4" height="4" fill="#ff8500"/>
<rect x="174.3" y="321.8" width="4.4" height="4.4" fill="#ffee00"/>
<polygon points="416.5,222.2 429.5,215.2 442.5,222.2 429.5,229.2" fill="#ff9a8a" stroke="none" stroke-width="0" />
<ellipse cx="429.5" cy="222.2" rx="6.5" ry="3.8" fill="#b0b0b0"/>
<rect x="418.5" y="220.2" width="5" height="4" fill="#ff8500"/>
<rect x="435.5" y="220.2" width="5" height="4" fill="#ff8500"/>
<rect x="427.3" y="215.7" width="4.4" height="4" fill="#ff8500"/>
<rect x="427.3" y="224.7" width="4.4" height="4" fill="#ff8500"/>
<rect x="427.3" y="220.0" width="4.4" height="4.4" fill="#ffee00"/>
<polygon points="-2.0,399.5 11.0,392.5 24.0,399.5 11.0,406.5" fill="#ff9a8a" stroke="none" stroke-width="0" />
<ellipse cx="11.0" cy="399.5" rx="6.5" ry="3.8" fill="#b0b0b0"/>
<rect x="0.0" y="397.5" width="5" height="4" fill="#ff8500"/>
<rect x="17.0" y="397.5" width="5" height="4" fill="#ff8500"/>
<rect x="8.8" y="393.0" width="4.4" height="4" fill="#ff8500"/>
<rect x="8.8" y="402.0" width="4.4" height="4" fill="#ff8500"/>
<rect x="8.8" y="397.3" width="4.4" height="4.4" fill="#ffee00"/>
<polygon points="626.5,536.2 639.5,529.2 652.5,536.2 639.5,543.2" fill="#ff9a8a" stroke="none" stroke-width="0" />
<ellipse cx="639.5" cy="536.2" rx="6.5" ry="3.8" fill="#b0b0b0"/>
<rect x="628.5" y="534.2" width="5" height="4" fill="#ff8500"/>
<rect x="645.5" y="534.2" width="5" height="4" fill="#ff8500"/>
<rect x="637.3" y="529.7" width="4.4" height="4" fill="#ff8500"/>
<rect x="637.3" y="538.7" width="4.4" height="4" fill="#ff8500"/>
<rect x="637.3" y="534.0" width="4.4" height="4.4" fill="#ffee00"/>
<polygon points="461.0,612.0 474.0,605.0 487.0,612.0 474.0,619.0" fill="#ff9a8a" stroke="none" stroke-width="0" />
<ellipse cx="474.0" cy="612.0" rx="6.5" ry="3.8" fill="#b0b0b0"/>
<rect x="463.0" y="610.0" width="5" height="4" fill="#ff8500"/>
<rect x="480.0" y="610.0" width="5" height="4" fill="#ff8500"/>
<rect x="471.8" y="605.5" width="4.4" height="4" fill="#ff8500"/>
<rect x="471.8" y="614.5" width="4.4" height="4" fill="#ff8500"/>
<rect x="471.8" y="609.8" width="4.4" height="4.4" fill="#ffee00"/>
<polygon points="725.5,360.0 738.5,353.0 751.5,360.0 738.5,367.0" fill="#ff9a8a" stroke="none" stroke-width="0" />
<ellipse cx="738.5" cy="360.0" rx="6.5" ry="3.8" fill="#b0b0b0"/>
<rect x="727.5" y="358.0" width="5" height="4" fill="#ff8500"/>
<rect x="744.5" y="358.0" width="5" height="4" fill="#ff8500"/>
<rect x="736.3" y="353.5" width="4.4" height="4" fill="#ff8500"/>
<rect x="736.3" y="362.5" width="4.4" height="4" fill="#ff8500"/>
<rect x="736.3" y="357.8" width="4.4" height="4.4" fill="#ffee00"/>
<ellipse cx="145.3" cy="808.7" rx="7.0" ry="4.6" fill="#ff8500"/>
<rect x="143.3" y="806.5" width="4" height="1.6" fill="#ffe600"/>
<ellipse cx="290.3" cy="783.7" rx="7.0" ry="4.6" fill="#ff8500"/>
<rect x="288.3" y="781.5" width="4" height="1.6" fill="#ffe600"/>
<ellipse cx="398.7" cy="833.3" rx="7.0" ry="4.6" fill="#ff8500"/>
<rect x="396.7" y="831.1" width="4" height="1.6" fill="#ffe600"/>
<ellipse cx="445.3" cy="833.3" rx="7.0" ry="4.6" fill="#ff8500"/>
<rect x="443.3" y="831.1" width="4" height="1.6" fill="#ffe600"/>
<ellipse cx="398.3" cy="925.0" rx="7.0" ry="4.6" fill="#ff8500"/>
<rect x="396.3" y="922.8" width="4" height="1.6" fill="#ffe600"/>
<ellipse cx="445.3" cy="925.0" rx="7.0" ry="4.6" fill="#ff8500"/>
<rect x="443.3" y="922.8" width="4" height="1.6" fill="#ffe600"/>
<ellipse cx="554.2" cy="875.0" rx="7.0" ry="4.6" fill="#ff8500"/>
<rect x="552.2" y="872.8" width="4" height="1.6" fill="#ffe600"/>
<ellipse cx="290.4" cy="874.8" rx="7.0" ry="4.6" fill="#ff8500"/>
<rect x="288.4" y="872.6" width="4" height="1.6" fill="#ffe600"/>
<ellipse cx="554.0" cy="784.2" rx="7.0" ry="4.6" fill="#ff8500"/>
<rect x="552.0" y="782.0" width="4" height="1.6" fill="#ffe600"/>
<ellipse cx="711.4" cy="711.9" rx="7.0" ry="4.6" fill="#ff8500"/>
<rect x="709.4" y="709.7" width="4" height="1.6" fill="#ffe600"/>
<ellipse cx="711.4" cy="804.3" rx="7.0" ry="4.6" fill="#ff8500"/>
<rect x="709.4" y="802.1" width="4" height="1.6" fill="#ffe600"/>
<ellipse cx="2.0" cy="742.0" rx="7.0" ry="4.6" fill="#ff8500"/>
<rect x="0.0" y="739.8" width="4" height="1.6" fill="#ffe600"/>
<polyline points="86.5,824.5 102.5,831.5 118.5,825.5" fill="none" stroke="#ff8a9a" stroke-width="1.2" />
<ellipse cx="102.5" cy="827.5" rx="10.5" ry="6.6" fill="#ff8500"/>
<rect x="100.5" y="825.3" width="4" height="1.6" fill="#ffe600"/>
<polyline points="86.9,915.9 102.9,922.9 118.9,916.9" fill="none" stroke="#ff8a9a" stroke-width="1.2" />
<ellipse cx="102.9" cy="918.9" rx="10.5" ry="6.6" fill="#ff8500"/>
<rect x="100.9" y="916.7" width="4" height="1.6" fill="#ffe600"/>
<polyline points="231.4,890.6 247.4,897.6 263.4,891.6" fill="none" stroke="#ff8a9a" stroke-width="1.2" />
<ellipse cx="247.4" cy="893.6" rx="10.5" ry="6.6" fill="#ff8500"/>
<rect x="245.4" y="891.4" width="4" height="1.6" fill="#ffe600"/>
<polyline points="231.4,982.3 247.4,989.3 263.4,983.3" fill="none" stroke="#ff8a9a" stroke-width="1.2" />
<ellipse cx="247.4" cy="985.3" rx="10.5" ry="6.6" fill="#ff8500"/>
<rect x="245.4" y="983.1" width="4" height="1.6" fill="#ffe600"/>
<polyline points="358.2,949.0 374.2,956.0 390.2,950.0" fill="none" stroke="#ff8a9a" stroke-width="1.2" />
<ellipse cx="374.2" cy="952.0" rx="10.5" ry="6.6" fill="#ff8500"/>
<rect x="372.2" y="949.8" width="4" height="1.6" fill="#ffe600"/>
<polyline points="452.8,949.0 468.8,956.0 484.8,950.0" fill="none" stroke="#ff8a9a" stroke-width="1.2" />
<ellipse cx="468.8" cy="952.0" rx="10.5" ry="6.6" fill="#ff8500"/>
<rect x="466.8" y="949.8" width="4" height="1.6" fill="#ffe600"/>
<polyline points="580.7,891.2 596.7,898.2 612.7,892.2" fill="none" stroke="#ff8a9a" stroke-width="1.2" />
<ellipse cx="596.7" cy="894.2" rx="10.5" ry="6.6" fill="#ff8500"/>
<rect x="594.7" y="892.0" width="4" height="1.6" fill="#ffe600"/>
<polyline points="580.4,982.5 596.4,989.5 612.4,983.5" fill="none" stroke="#ff8a9a" stroke-width="1.2" />
<ellipse cx="596.4" cy="985.5" rx="10.5" ry="6.6" fill="#ff8500"/>
<rect x="594.4" y="983.3" width="4" height="1.6" fill="#ffe600"/>
<polyline points="736.8,910.8 752.8,917.8 768.8,911.8" fill="none" stroke="#ff8a9a" stroke-width="1.2" />
<ellipse cx="752.8" cy="913.8" rx="10.5" ry="6.6" fill="#ff8500"/>
<rect x="750.8" y="911.6" width="4" height="1.6" fill="#ffe600"/>
<polyline points="736.8,1001.0 752.8,1008.0 768.8,1002.0" fill="none" stroke="#ff8a9a" stroke-width="1.2" />
<ellipse cx="752.8" cy="1004.0" rx="10.5" ry="6.6" fill="#ff8500"/>
<rect x="750.8" y="1001.8" width="4" height="1.6" fill="#ffe600"/>
<polyline points="883.1,936.1 899.1,943.1 915.1,937.1" fill="none" stroke="#ff8a9a" stroke-width="1.2" />
<ellipse cx="899.1" cy="939.1" rx="10.5" ry="6.6" fill="#ff8500"/>
<rect x="897.1" y="936.9" width="4" height="1.6" fill="#ffe600"/>
<polyline points="86.9,1005.0 102.9,1012.0 118.9,1006.0" fill="none" stroke="#ff8a9a" stroke-width="1.2" />
<ellipse cx="102.9" cy="1008.0" rx="10.5" ry="6.6" fill="#ff8500"/>
<rect x="100.9" y="1005.8" width="4" height="1.6" fill="#ffe600"/>
<polygon points="139.0,614.0 145.5,615.5 146.5,620.5 139.5,620.0" fill="#ff8500" stroke="none" stroke-width="0" />
<polygon points="283.5,680.3 290.0,681.8 291.0,686.8 284.0,686.3" fill="#ff8500" stroke="none" stroke-width="0" />
<polygon points="391.5,730.5 398.0,732.0 399.0,737.0 392.0,736.5" fill="#ff8500" stroke="none" stroke-width="0" />
<polygon points="445.5,729.5 452.0,731.0 453.0,736.0 446.0,735.5" fill="#ff8500" stroke="none" stroke-width="0" />
<polygon points="550.0,681.5 556.5,683.0 557.5,688.0 550.5,687.5" fill="#ff8500" stroke="none" stroke-width="0" />
<polygon points="708.0,609.5 714.5,611.0 715.5,616.0 708.5,615.5" fill="#ff8500" stroke="none" stroke-width="0" />
<g font-family="Liberation Sans, sans-serif" font-weight="bold" font-size="15.5px" text-anchor="middle"><text x="41.4" y="952.3" fill="#ff0000">Z</text><text x="23.4" y="966.3" fill="#0000ff">Y</text><text x="59.8" y="966.3" fill="#008000">X</text></g>
<polyline points="42.1,977.0 42.1,959.0" fill="none" stroke="#ff0000" stroke-width="1.8" />
<polygon points="42.1,957.5 38.6,963.0 45.6,963.0" fill="#ff0000" stroke="none" stroke-width="0" />
<polyline points="42.1,976.7 28.0,969.5" fill="none" stroke="#0000ff" stroke-width="1.8" />
<polygon points="26.5,968.5 33.5,968.6 30.5,974.3" fill="#0000ff" stroke="none" stroke-width="0" />
<polyline points="42.1,976.7 56.0,968.8" fill="none" stroke="#008000" stroke-width="1.8" />
<polygon points="57.5,967.8 50.5,968.3 53.6,973.8" fill="#008000" stroke="none" stroke-width="0" />
<g shape-rendering="auto"><defs>
<linearGradient id="flh" x1=".75" y1="0" x2=".25" y2="1"><stop offset="0" stop-color="#b4b4b4"/><stop offset=".35" stop-color="#949494"/><stop offset="1" stop-color="#6c6c6c"/></linearGradient>
<linearGradient id="flr" x1="0" y1=".6" x2="1" y2="0"><stop offset="0" stop-color="#b42a1a"/><stop offset=".5" stop-color="#e2401a"/><stop offset=".8" stop-color="#f07030"/><stop offset="1" stop-color="#f89020"/></linearGradient>
<radialGradient id="fly" cx=".38" cy=".62" r=".75"><stop offset="0" stop-color="#ffffa0"/><stop offset=".25" stop-color="#ffff10"/><stop offset=".6" stop-color="#ffd800"/><stop offset="1" stop-color="#ff9418"/></radialGradient>
</defs>
<path d="M598.800 629 Q596 618.500 606 612.500 Q614 609 619.500 612.500 L648.500 641 L627.600 661.500 Z" fill="url(#flh)" stroke="#787878" stroke-width=".8"/>
<path d="M627.600 661 L648 641.500 L677.700 641 L690.400 649 Q652 652 632 694 L628.500 691.600 Z" fill="url(#flr)" stroke="#8a8a8a" stroke-width=".8"/>
<path d="M655 650 Q668 643 678 644" stroke="#ffd0b0" stroke-width="3" fill="none" opacity=".7"/>
<path d="M632 693.700 Q642 664 666 652 Q680 645.500 690.400 649 L690.400 702.200 L634 702.800 Z" fill="url(#fly)"/>
<path d="M640 678 L668 700" stroke="#fff" stroke-width="3" opacity=".55"/>
</g>
</svg>
<div class="a" style="left:996px;top:179px;width:5px;height:828px;background:#e4e6e8"></div>
<svg class="a" style="left:996px;top:544px" width="200" height="20" viewBox="996 544 200 20"><polygon points="996,544 1086,544 1092.4,547 1058,563.5 996,563.5" fill="#c3c3c3"/><polygon points="1058.500,563.500 1092.400,547.500 1124,563.500" fill="#d6a060"/><path d="M1056 563.500l36.400-16.700 33 16.700" stroke="#000" stroke-width="2.800" fill="none"/><path d="M1001.700 544v20M1102.800 546v18" stroke="#35e24f" stroke-width="1.600"/></svg>
<div class="t" style="left:6px;top:182px;font-family:'Liberation Serif',serif;font-size:13px">1</div>
<!-- ===== dialog "Стержень 2477" ===== -->
<div class="win" style="left:734px;top:292px;width:254px;height:602px;border:1px solid #9a9a9a;box-shadow:1px 1px 3px rgba(0,0,0,.35)">
<div class="a" style="left:0;top:0;width:252px;height:30px;background:#fff"></div>
</div>
<div class="a" style="left:0;top:0;width:0;height:0">
<svg class="a" style="left:742px;top:300px" width="18" height="15"><rect x="1.500" y="1" width="14" height="12" fill="#fafafa" stroke="#b4b8bc"/><rect x="3" y="3" width="5.500" height="8" fill="#4a9a6a"/><rect x="3" y="3" width="5.500" height="3" fill="#5a8ab0"/><rect x="9.500" y="3" width="3" height="8" fill="#e0e0e0"/><rect x="13" y="3" width="2" height="4" fill="#6aa0a0"/></svg>
<div class="t" style="left:764px;top:301.8px;font-size:12px;color:#8c8c8c">Стержень  2477</div>
<svg class="a" style="left:964px;top:300px" width="14" height="14"><path d="M1.500 1.500l11 11M12.500 1.500l-11 11" stroke="#6a6a6a" stroke-width="1.100"/></svg>

<div class="gb" style="left:740px;top:329px;width:242px;height:33px"><b>Номери вузлів</b></div>
<div class="edit" style="left:743px;top:339px;width:230px;height:20px"><span>766214, 772922</span></div>
<div class="gb" style="left:740px;top:365px;width:242px;height:33px"></div>
<div class="t" style="left:746px;top:377px">№</div>
<div class="edit" style="left:768px;top:372px;width:50px;height:21px"><span>2477</span></div>
<div class="t" style="left:822px;top:377px">Блок N</div>
<div class="ro" style="left:864px;top:373px;width:33px;height:21px"><span style="left:3px">5123</span></div>
<div class="cb" style="left:899px;top:376px"></div>
<div class="t" style="left:915px;top:378px">Відмічений</div>
<div class="gb" style="left:740px;top:405px;width:242px;height:34px"><b>Тип жорсткості</b></div>
<div class="a" style="left:743px;top:416px;width:236px;height:22px;background:#e4e4e4;border:1px solid #adadad"></div>
<div class="t" style="left:746px;top:422px">142. Кільце 40 X 0 (Columns 4.2/B40/A500/</div>
<svg class="a" style="left:963px;top:423px" width="12" height="8"><path d="M1.500 1.500l4.500 4.500 4.500-4.500" stroke="#444" fill="none" stroke-width="1.100"/></svg>
<div class="gb" style="left:741px;top:447px;width:68px;height:31px"><b>Тип КЕ</b></div>
<div class="edit" style="left:753px;top:456px;width:45px;height:20px"><span>10</span></div>
<div class="gb" style="left:816px;top:447px;width:81px;height:31px"><b style="left:5px">К-ть перерізів</b></div>
<div class="edit" style="left:828px;top:456px;width:53px;height:20px"><span>3</span></div>
<div class="gb" style="left:899px;top:447px;width:79px;height:31px"><b>A :  ID</b></div>
<div class="ro" style="left:911px;top:456px;width:53px;height:20px"></div>
<div class="gb" style="left:738px;top:485px;width:244px;height:33px"><b style="left:7px">Довжина, координати центра ваги</b></div>
<div class="ro" style="left:741px;top:492px;width:234px;height:23px"><span style="left:3px">L=4.65м, Xc=20.07м, Yc=3.37м, Zc=252.525м</span></div>
<div class="btn" style="left:748px;top:522px;width:105px;height:21px;line-height:19px">Видалити елемент</div>
<div class="btn" style="left:864px;top:522px;width:106px;height:21px;line-height:19px">Додати елемент</div>
<div class="t" style="left:858px;top:562px">№ заван.</div>
<div class="edit" style="left:926px;top:557px;width:35px;height:23px"><span>1</span></div>
<div class="spin u" style="left:963px;top:558px"></div><div class="spin d" style="left:963px;top:570px"></div>

<!-- tab strip -->
<svg class="a" style="left:734px;top:584px" width="204" height="24" viewBox="736 584 204 24">
 <g fill="#f0f0f0" stroke="#fff" stroke-width="1"><path d="M739.500 606v-17h20v17M761.500 606v-17h20v17M783.500 606v-17h20v17M805.500 606v-17h20v17M827.500 606v-17h20v17M849.500 606v-17h20v17M895.500 606v-17h20v17M916.500 606v-17h19v17"/></g>
 <g stroke="#8a8a8a" stroke-width="1.200"><path d="M760 590v16M782 590v16M804 590v16M826 590v16M848 590v16M915.500 590v16M936 590v16"/></g>
 <path d="M870.500 607v-21h23v21" fill="#f0f0f0" stroke="#fff"/><path d="M894 587v20" stroke="#8a8a8a" stroke-width="1.200"/>
 <!-- icons -->
 <path d="M743 596l5-4v2.500c6 0 8 4 7 9h-3c0-3-1-5-4-5v2.500z" fill="#2a8a3a" stroke="#124a1a" stroke-width=".6"/><path d="M750 598v8M747 603l3 3 3-3" stroke="#2a2a8a" stroke-width="1.400" fill="none"/>
 <path d="M764 598l2-2h6v5h-8z" fill="#2a6a5a" stroke="#123" stroke-width=".6"/><path d="M772 599h9" stroke="#1d4064" stroke-width="2"/>
 <path d="M785 596h5M797 596h5M794 600v6M785 594v4M802 594v4" stroke="#1d4064" stroke-width="1.500"/><circle cx="794" cy="596.500" r="3" fill="#3a8a3a" stroke="#1d4064"/>
 <path d="M808 591l14 12" stroke="#1d4064" stroke-width="2.600"/><path d="M821 591l-11 9M815 604l8-2M818 593l5-2" stroke="#2a9a3a" stroke-width="1.300"/><path d="M809 593l3 1" stroke="#d02020" stroke-width="1.300"/>
 <text x="837.500" y="604" font-family="Liberation Serif,serif" font-weight="bold" font-size="14" fill="#2a3a9a" text-anchor="middle" textLength="16">C1</text>
 <path d="M852 605l9-12" stroke="#e8b020" stroke-width="2.400"/><path d="M857 591c3-2 7-2 9 1l-2 1c-2-1-4-1-6 0z" fill="#8a8a92" stroke="#555" stroke-width=".6"/>
 <path d="M882 588c1 4 6 6 5 12 0 4-3 6-6 6s-6-2-5-7c1-3 2-3 2-6 2 1 2 3 3 3 1-2 0-5 1-8z" fill="#ff8a10"/><path d="M882 597c2 2 3 4 2 6s-5 2-5-1c0-2 2-3 3-5z" fill="#ffe040"/>
 <path d="M899 591h12v14h-12z" fill="#6a7a8a"/><path d="M899 591h5v5h-5z" fill="#fff"/><text x="901.500" y="596" font-family="Liberation Serif,serif" font-weight="bold" font-size="7" fill="#c02020" text-anchor="middle">T</text><g fill="#e02020"><rect x="901" y="598" width="2" height="2"/><rect x="905" y="598" width="2" height="2"/><rect x="901" y="602" width="2" height="2"/><rect x="905" y="602" width="2" height="2"/><rect x="908.500" y="602" width="2" height="2"/></g>
 <path d="M924 590h8v10h-8z" fill="#fff" stroke="#b03030"/><path d="M921 593h8v10h-8z" fill="#fff" stroke="#3a8a3a"/><path d="M918.500 596h8v10h-8z" fill="#e8e8f8" stroke="#2a2a7a"/><path d="M920 599h5M920 601.500h5M920 604h5" stroke="#6a6aa8" stroke-width=".8"/>
</svg>
<!-- tab page -->
<div class="a" style="left:735px;top:606px;width:251px;height:260px;border:1px solid;border-color:#fff #696969 #696969 #fff;box-shadow:1px 1px 0 #a0a0a0 inset;"></div>
<div class="a" style="left:869px;top:605px;width:22px;height:3px;background:#f0f0f0"></div>
<div class="gb" style="left:740px;top:618px;width:78px;height:32px"><b>Варіант</b></div>
<div class="edit" style="left:755px;top:626px;width:23px;height:20px"><span>1</span></div>
<div class="spin u" style="left:780px;top:626px;height:10px"></div><div class="spin d" style="left:780px;top:636px;height:10px"></div>
<div class="gb" style="left:821px;top:618px;width:102px;height:30px"><b>Переріз</b></div>
<div class="edit" style="left:827px;top:626px;width:21px;height:20px"><span>1</span></div>
<div class="spin u" style="left:851px;top:626px;height:10px"></div><div class="spin d" style="left:851px;top:636px;height:10px"></div>
<div class="cb" style="left:928px;top:627px"></div>
<svg class="a" style="left:947px;top:624px" width="20" height="20"><circle cx="7.500" cy="7.500" r="5" fill="#dcecf8" stroke="#98a8b8" stroke-width="1.400"/><path d="M11.500 11.500l5 5" stroke="#556" stroke-width="2.600" stroke-linecap="round"/></svg>
<div class="t" style="left:737px;top:654px">Межа вогнестійкості і час горіння</div>
<div class="ro" style="left:740px;top:667px;width:136px;height:20px"><span style="left:5px">R90</span></div>
<div class="ro" style="left:890px;top:667px;width:45px;height:20px"><span style="left:5px">90</span></div>
<div class="t" style="left:940px;top:673px">хв.</div>
<div class="t" style="left:737px;top:695px">Грані схильні до нагріву</div>
<div class="cbd" style="left:835px;top:707px"></div><div class="cbd" style="left:785px;top:752px"></div><div class="cbd" style="left:883px;top:752px"></div><div class="cbd" style="left:835px;top:793px"></div>
<svg class="a" style="left:780px;top:705px" width="120" height="104" viewBox="780 705 120 104">
 <defs><linearGradient id="gDg" x1="0" y1="0" x2="0" y2="1"><stop offset="0" stop-color="#eef2f0"/><stop offset="1" stop-color="#b4bcb8"/></linearGradient></defs>
 <g stroke="#c4c4c4" stroke-width="1.300" fill="none"><path d="M837.500 713.500l2.500 3 5-6M787.500 758.500l2.500 3 5-6M837.500 799.500l2.500 3 5-6"/></g>
 <rect x="810.500" y="733.500" width="57" height="57" fill="url(#gDg)" stroke="#1a4a4a" stroke-width="1.200"/>
 <g font-family="Liberation Serif,serif" font-weight="bold" font-size="10" fill="#222" text-anchor="middle"><text x="840" y="744">2</text><text x="840" y="788">1</text><text x="816" y="767">3</text><text x="862.500" y="767">4</text></g>
 <path d="M840 775v-24" stroke="#e82020" stroke-width="1.200"/><path d="M840 749l-2 4h4z" fill="#e82020"/>
 <path d="M852 763.500h-24" stroke="#2a4ab0" stroke-width="1.200"/><path d="M826 763.500l4-2v4z" fill="#2a4ab0"/>
 <text x="843" y="756" font-size="7" fill="#e82020" font-family="Liberation Sans,sans-serif">Z1</text><text x="828" y="760" font-size="7" fill="#2a4ab0" font-family="Liberation Sans,sans-serif">Y1</text>
</svg>
<div class="t" style="left:737px;top:810px">Температурний режим</div>
<div class="ro" style="left:740px;top:825px;width:222px;height:20px"><span style="left:5px">Стандартный</span></div>
<div class="btn" style="left:849px;top:868px;width:31px;height:21px"></div>
<div class="btn" style="left:936px;top:868px;width:24px;height:21px"></div>
<svg class="a" style="left:849px;top:868px" width="112" height="22"><path d="M9 15l3 0M13 12l4 4 8-11" stroke="#4a8a2a" stroke-width="2" fill="none"/><path d="M9 16h1M11 16h1" stroke="#333"/><text x="99" y="17" font-family="Liberation Serif,serif" font-weight="bold" font-size="15" fill="#4a8a2a" text-anchor="middle">?</text></svg>
</div>
<svg width="0" height="0" class="a"><defs>
<linearGradient id="gBr" gradientUnits="userSpaceOnUse" x1="0" y1="11" x2="0" y2="38"><stop offset="0" stop-color="#c05a12"/><stop offset=".45" stop-color="#8a3e10"/><stop offset="1" stop-color="#35201a"/></linearGradient>
<linearGradient id="gTM" x1="0" y1="0" x2="1" y2="1"><stop offset="0" stop-color="#fff8a0"/><stop offset="1" stop-color="#fff"/></linearGradient>
</defs></svg>
<!-- ===== window 1 ===== -->
<div class="win" style="left:994.5px;top:52.5px;width:923.0px;height:493.0px;border:1px solid #a8a8a8"></div>
<div class="a" style="left:995.5px;top:53.5px;width:921.0px;height:31px;background:#fff"></div>
<svg class="a" style="left:1004.0px;top:61.5px" width="18" height="15"><rect x="1.500" y="1" width="14" height="12" fill="#fafafa" stroke="#b4b8bc"/><rect x="3" y="3" width="5.500" height="8" fill="#4a9a6a"/><rect x="3" y="3" width="5.500" height="3" fill="#5a8ab0"/><rect x="9.500" y="3" width="3" height="8" fill="#e0e0e0"/><rect x="13" y="3" width="2" height="4" fill="#6aa0a0"/></svg>
<div class="t" style="left:1025.0px;top:63.2px;font-size:11.8px;color:#8c8c8c">Вогнестійкість елемента</div>
<svg class="a" style="left:1895.0px;top:61.5px" width="14" height="14"><path d="M1.500 1.500l10 10M11.500 1.500l-10 10" stroke="#6a6a6a" stroke-width="1.100"/></svg>
<div class="tb p" style="left:999.5px;top:88.2px"><svg width="47" height="47" viewBox="0 0 47 47"><text x="12.2" y="32.8" font-family="Liberation Serif,serif" font-weight="bold" font-size="41" fill="url(#gBr)" textLength="11.5" lengthAdjust="spacingAndGlyphs">t</text><text x="25.7" y="36.2" font-family="Liberation Serif,serif" font-weight="bold" font-size="21" fill="url(#gBr)" textLength="9.3" lengthAdjust="spacingAndGlyphs">b</text></svg></div>
<div class="tb" style="left:1049.5px;top:88.2px"><svg width="47" height="47" viewBox="0 0 47 47"><text x="7.8" y="32.6" font-family="Liberation Serif,serif" font-weight="bold" font-size="27.5" fill="url(#gBr)" textLength="15" lengthAdjust="spacingAndGlyphs">R</text><text x="23.7" y="36.2" font-family="Liberation Serif,serif" font-weight="bold" font-size="17" fill="url(#gBr)" textLength="16" lengthAdjust="spacingAndGlyphs">b,n</text></svg></div>
<div class="tb" style="left:1099.5px;top:88.2px"><svg width="47" height="47" viewBox="0 0 47 47"><text x="7.8" y="32.6" font-family="Liberation Serif,serif" font-weight="bold" font-size="27.5" fill="url(#gBr)" textLength="14" lengthAdjust="spacingAndGlyphs">R</text><text x="21.3" y="36.2" font-family="Liberation Serif,serif" font-weight="bold" font-size="17" fill="url(#gBr)" textLength="18" lengthAdjust="spacingAndGlyphs">bt,n</text></svg></div>
<div class="tb" style="left:1149.5px;top:88.2px"><svg width="47" height="47" viewBox="0 0 47 47"><text x="10" y="32.6" font-family="Liberation Serif,serif" font-weight="bold" font-size="28" fill="url(#gBr)" textLength="15.5" lengthAdjust="spacingAndGlyphs">E</text><text x="26.4" y="36.2" font-family="Liberation Serif,serif" font-weight="bold" font-size="21" fill="url(#gBr)" textLength="10" lengthAdjust="spacingAndGlyphs">b</text></svg></div>
<div class="tb" style="left:1205.0px;top:88.2px"><svg width="47" height="47" viewBox="0 0 47 47"><text x="12.7" y="32.8" font-family="Liberation Serif,serif" font-weight="bold" font-size="41" fill="url(#gBr)" textLength="11.5" lengthAdjust="spacingAndGlyphs">t</text><text x="26.2" y="36.2" font-family="Liberation Serif,serif" font-weight="bold" font-size="21" fill="url(#gBr)" textLength="7.5" lengthAdjust="spacingAndGlyphs">s</text></svg></div>
<div class="tb" style="left:1255.0px;top:88.2px"><svg width="47" height="47" viewBox="0 0 47 47"><text x="7.8" y="32.6" font-family="Liberation Serif,serif" font-weight="bold" font-size="27.5" fill="url(#gBr)" textLength="15" lengthAdjust="spacingAndGlyphs">R</text><text x="24.5" y="36.2" font-family="Liberation Serif,serif" font-weight="bold" font-size="17" fill="url(#gBr)" textLength="14.7" lengthAdjust="spacingAndGlyphs">s,n</text></svg></div>
<div class="tb" style="left:1305.0px;top:88.2px"><svg width="47" height="47" viewBox="0 0 47 47"><text x="7.8" y="32.6" font-family="Liberation Serif,serif" font-weight="bold" font-size="27.5" fill="url(#gBr)" textLength="13.5" lengthAdjust="spacingAndGlyphs">R</text><text x="21" y="36.2" font-family="Liberation Serif,serif" font-weight="bold" font-size="17" fill="url(#gBr)" textLength="18.4" lengthAdjust="spacingAndGlyphs">sc,n</text></svg></div>
<div class="tb" style="left:1355.0px;top:88.2px"><svg width="47" height="47" viewBox="0 0 47 47"><text x="9.5" y="32.6" font-family="Liberation Serif,serif" font-weight="bold" font-size="28" fill="url(#gBr)" textLength="15.5" lengthAdjust="spacingAndGlyphs">E</text><text x="26.7" y="36.2" font-family="Liberation Serif,serif" font-weight="bold" font-size="21" fill="url(#gBr)" textLength="9.8" lengthAdjust="spacingAndGlyphs">s</text></svg></div>
<div class="tb" style="left:1411.0px;top:88.2px"><svg width="47" height="47" viewBox="0 0 47 47"><rect x="10" y="9" width="12" height="12" fill="#e8924a"/><rect x="22" y="9" width="13" height="12" fill="url(#gTM)"/><rect x="10" y="21" width="12" height="11" fill="#b03030" opacity=".75"/><path d="M10 21h25M22 9v14" stroke="#8a4a2a" stroke-width=".8"/><text x="13.5" y="33" font-size="15" fill="#222" font-family="Liberation Sans,sans-serif">t</text><path d="M18 38l10-20" stroke="#222" stroke-width="1.4"/><text x="25" y="39" font-size="18" fill="#222" font-family="Liberation Sans,sans-serif">M</text></svg></div>
<div class="tb" style="left:1461.0px;top:88.2px"><svg width="47" height="47" viewBox="0 0 47 47"><path d="M9 16l9-6h13l-9 6z" fill="#e4e4e4" stroke="#aaa" stroke-width=".7"/><path d="M22 16l9-6v13l-9 7z" fill="#d0e4ec" stroke="#aaa" stroke-width=".7"/><rect x="9" y="16" width="13" height="4" fill="#f0a0b0"/><rect x="9" y="20" width="13" height="10" fill="#f4e4e4"/><text x="8" y="34" font-size="16" fill="#a09898" font-family="Liberation Sans,sans-serif">X</text><path d="M20 40l10-20" stroke="#a09898" stroke-width="1.3"/><text x="27" y="40" font-size="16" fill="#a09898" font-family="Liberation Sans,sans-serif">Y</text></svg></div>
<div class="tb" style="left:1511.0px;top:88.2px"><svg width="47" height="47" viewBox="0 0 47 47"><g><rect x="9" y="10" width="4" height="4" fill="#e02020"/><rect x="13" y="10" width="4" height="4" fill="#ff9000"/><rect x="17" y="10" width="4" height="4" fill="#e8e000"/><rect x="21" y="10" width="4" height="4" fill="#2080e0"/><rect x="25" y="10" width="4" height="4" fill="#2a2a9a"/><rect x="9.5" y="10.5" width="20" height="3.5" fill="none" stroke="#333" stroke-width=".6"/></g><path d="M13 33l19-20" stroke="#223" stroke-width="1.3"/><g><rect x="33" y="17" width="4" height="4" fill="#2a2a9a"/><rect x="33" y="21" width="4" height="4" fill="#2080e0"/><rect x="33" y="25" width="4" height="4" fill="#30b030"/><rect x="33" y="29" width="4" height="4" fill="#ff9000"/><rect x="33" y="33" width="4" height="4" fill="#e02020"/></g></svg></div>
<div class="tb" style="left:1561.0px;top:88.2px"><svg width="47" height="47" viewBox="0 0 47 47"><path d="M9 16l9-6h13l-9 6z" fill="#e4e4e4" stroke="#aaa" stroke-width=".7"/><path d="M22 16l9-6v13l-9 7z" fill="#d0e4ec" stroke="#aaa" stroke-width=".7"/><rect x="9" y="16" width="13" height="4" fill="#f0a0b0"/><rect x="9" y="20" width="13" height="10" fill="#f4e4e4"/><text x="16" y="34" font-size="16" fill="#e08098" font-family="Liberation Sans,sans-serif">!</text><path d="M20 39l9-18" stroke="#b0a0a0" stroke-width="1.2"/><text x="28" y="40" font-size="16" fill="#e08098" font-family="Liberation Sans,sans-serif">?</text></svg></div>
<div class="tb" style="left:1611.0px;top:88.2px"><svg width="47" height="47" viewBox="0 0 47 47"><rect x="10.5" y="10.5" width="27" height="27" fill="#e8924a" stroke="#2a2a5a" stroke-width="1"/><path d="M22 11c6 6 6 10 15 12v-12z" fill="#fff0a0" stroke="#2a2a5a" stroke-width=".7"/><path d="M37.500 23c-5 2-8 6-7 14h7z" fill="#fff0a0" stroke="#2a2a5a" stroke-width=".7"/><path d="M10.500 26c5 1 9 5 10 11.500h-10z" fill="#b03828" stroke="#2a2a5a" stroke-width=".7"/><text x="19" y="24" font-size="14" fill="#2a2a3a" font-family="Liberation Sans,sans-serif">2</text><text x="19" y="36" font-size="14" fill="#2a2a3a" font-family="Liberation Sans,sans-serif">6</text></svg></div>
<div class="tb" style="left:1661.0px;top:88.2px"><svg width="47" height="47" viewBox="0 0 47 47"><g stroke="#777" stroke-width=".6"><rect x="9" y="21" width="4" height="5" fill="#fff080"/><rect x="13" y="21" width="4" height="5" fill="#ffe060"/><rect x="17" y="21" width="4" height="5" fill="#ffa030"/><rect x="21" y="21" width="4" height="5" fill="#c03818"/><rect x="25" y="21" width="4" height="5" fill="#ff9838"/><rect x="29" y="21" width="4" height="5" fill="#ffe060"/><rect x="33" y="21" width="4" height="5" fill="#fff080"/></g></svg></div>
<div class="tb" style="left:1717.0px;top:88.2px"><svg width="47" height="47" viewBox="0 0 47 47"><path d="M12.5 8.5h18l6 6v23h-24z" fill="#f4f4f6" stroke="#aaa"/><path d="M30.500 8.500v6h6" fill="#fff" stroke="#aaa" stroke-width=".8"/><path d="M14 26h12M14 29h12M14 32h12" stroke="#9898c8" stroke-width="1"/><text x="14" y="32" font-family="Liberation Serif,serif" font-weight="bold" font-size="25" fill="#c81820">T</text><rect x="28" y="13" width="4" height="17" rx="2" fill="#fff" stroke="#8898b8"/><rect x="29.300" y="19" width="1.600" height="12" fill="#d02020"/><circle cx="30" cy="32.500" r="3.600" fill="#d02020" stroke="#8898b8" stroke-width=".8"/></svg></div>
<div class="tb" style="left:1767.0px;top:88.2px"><svg width="47" height="47" viewBox="0 0 47 47"><path d="M9 17l5-5 4 1 2-2 8 2v3l8 2v16l-22 5-5-3z" fill="#e6e6e6" stroke="#777" stroke-width=".9"/><path d="M14 21l22-3" stroke="#999" stroke-width=".7"/><circle cx="22" cy="28" r="6.200" fill="#888" stroke="#444"/><circle cx="22" cy="28" r="3.500" fill="#222"/><circle cx="20.500" cy="26.500" r="1.100" fill="#fff"/><rect x="29" y="20" width="4" height="2.500" fill="#bbb" transform="rotate(10 31 21)"/></svg></div>
<div class="tb" style="left:1817.0px;top:88.2px"><svg width="47" height="47" viewBox="0 0 47 47"><text x="24" y="39" font-family="Liberation Serif,serif" font-weight="bold" font-size="40" fill="#2e6a2e" text-anchor="middle">?</text></svg></div>
<div class="tb" style="left:1867.0px;top:88.2px"><svg width="47" height="47" viewBox="0 0 47 47"><path d="M9.6 28.1L14.8 25.6L20.7 32L36.3 10.4V21.5L20 38.5Z" fill="#2c6a24"/></svg></div>
<div class="canvas" style="left:1018.5px;top:139.8px;width:883px;height:389px"></div>
<div class="lg" style="left:1028.0px;top:148.0px">Tb, °C</div>
<div class="lg" style="left:1028.0px;top:164.0px">Ізополя</div>
<svg class="a" style="left:1165.0px;top:160.0px" width="660" height="14"><rect x="6.2" y="1.7" width="81" height="9.8" fill="#ffff78" stroke="#808080" stroke-width="1"/><rect x="87.1" y="1.7" width="81" height="9.8" fill="#ffe850" stroke="#808080" stroke-width="1"/><rect x="168.0" y="1.7" width="81" height="9.8" fill="#ffd83c" stroke="#808080" stroke-width="1"/><rect x="248.9" y="1.7" width="81" height="9.8" fill="#ffbc28" stroke="#808080" stroke-width="1"/><rect x="329.8" y="1.7" width="81" height="9.8" fill="#ffa01e" stroke="#808080" stroke-width="1"/><rect x="410.7" y="1.7" width="81" height="9.8" fill="#ff6600" stroke="#808080" stroke-width="1"/><rect x="491.6" y="1.7" width="81" height="9.8" fill="#c82800" stroke="#808080" stroke-width="1"/><rect x="572.5" y="1.7" width="81" height="9.8" fill="#800000" stroke="#808080" stroke-width="1"/></svg>
<div class="lv" style="left:1171.2px;top:173.5px">28</div>
<div class="lv" style="left:1252.1px;top:173.5px">143</div>
<div class="lv" style="left:1333.0px;top:173.5px">257</div>
<div class="lv" style="left:1413.9px;top:173.5px">371</div>
<div class="lv" style="left:1494.8px;top:173.5px">485</div>
<div class="lv" style="left:1575.7px;top:173.5px">599</div>
<div class="lv" style="left:1656.6px;top:173.5px">713</div>
<div class="lv" style="left:1737.5px;top:173.5px">827</div>
<div class="lv" style="left:1818.4px;top:173.5px">942</div>
<svg class="a" style="left:0;top:0;pointer-events:none" width="1920" height="1080">
<clipPath id="cc1"><circle cx="1495.6" cy="368.4" r="135.0"/></clipPath>
<g clip-path="url(#cc1)">
<circle cx="1495.6" cy="368.4" r="137.0" fill="#800000"/>
<path d="M1596.7 278.9 1593.1 277.4 1590.6 275.1 1587.9 272.8 1585.3 270.5 1582.6 268.3 1579.9 266.1 1577.2 264.0 1574.4 261.9 1567.0 257.0 1559.3 252.7 1551.4 248.8 1543.2 245.5 1534.8 242.8 1526.3 240.6 1517.7 238.9 1508.9 237.9 1500.2 237.4 1491.4 237.5 1482.7 238.2 1474.0 239.5 1465.5 241.3 1457.1 243.7 1448.9 246.7 1440.9 250.2 1433.2 254.2 1425.7 258.7 1418.6 263.7 1411.8 269.1 1405.4 275.0 1399.4 281.3 1393.9 288.0 1388.8 295.0 1384.2 302.3 1380.1 310.0 1376.5 317.9 1373.5 325.9 1371.0 334.2 1369.0 342.6 1367.6 351.2 1366.8 359.8 1366.6 368.4 1366.8 377.0 1367.6 385.6 1369.0 394.2 1371.0 402.6 1373.5 410.9 1376.5 418.9 1380.1 426.8 1384.2 434.5 1388.8 441.8 1393.9 448.8 1399.4 455.5 1405.4 461.8 1411.8 467.7 1418.6 473.1 1425.7 478.1 1433.2 482.6 1440.9 486.6 1448.9 490.1 1457.1 493.1 1465.5 495.5 1474.0 497.3 1482.7 498.6 1491.4 499.3 1500.2 499.4 1508.9 498.9 1517.7 497.9 1526.3 496.2 1534.8 494.0 1543.2 491.3 1551.4 488.0 1559.3 484.1 1567.0 479.8 1574.4 474.9 1577.2 472.8 1579.9 470.7 1582.6 468.5 1585.3 466.3 1587.9 464.0 1590.6 461.7 1593.1 459.4 1596.7 457.9 1599.0 459.8 1638.6 459.8 1638.6 277.0 1599.0 277.0Z" fill="#c82800"/>
<path d="M1599.8 282.5 1595.6 281.5 1592.3 279.8 1589.5 277.7 1586.7 275.7 1583.8 273.8 1581.0 271.8 1578.2 269.9 1575.4 268.0 1568.1 263.3 1560.6 259.0 1552.9 255.1 1544.9 251.7 1536.8 248.9 1528.6 246.5 1520.2 244.7 1511.7 243.5 1503.2 242.9 1494.6 242.8 1486.1 243.4 1477.7 244.6 1469.4 246.3 1461.2 248.6 1453.2 251.4 1445.5 254.8 1438.0 258.6 1430.8 263.0 1423.9 267.8 1417.4 273.1 1411.2 278.8 1405.5 284.8 1400.2 291.3 1395.3 298.1 1390.9 305.1 1387.0 312.5 1383.6 320.0 1380.8 327.8 1378.4 335.7 1376.7 343.8 1375.4 352.0 1374.7 360.2 1374.6 368.4 1374.7 376.6 1375.4 384.8 1376.7 393.0 1378.4 401.1 1380.8 409.0 1383.6 416.8 1387.0 424.3 1390.9 431.7 1395.3 438.7 1400.2 445.5 1405.5 452.0 1411.2 458.0 1417.4 463.7 1423.9 469.0 1430.8 473.8 1438.0 478.2 1445.5 482.0 1453.2 485.4 1461.2 488.2 1469.4 490.5 1477.7 492.2 1486.1 493.4 1494.6 494.0 1503.2 493.9 1511.7 493.3 1520.2 492.1 1528.6 490.3 1536.8 487.9 1544.9 485.1 1552.9 481.7 1560.6 477.8 1568.1 473.5 1575.4 468.8 1578.2 466.9 1581.0 465.0 1583.8 463.0 1586.7 461.1 1589.5 459.1 1592.3 457.0 1595.6 455.3 1599.8 454.3 1602.1 456.2 1638.6 456.2 1638.6 280.6 1602.1 280.6Z" fill="#ff6600"/>
<path d="M1602.7 286.2 1597.9 285.6 1593.8 284.6 1590.7 282.8 1587.6 281.1 1584.7 279.3 1581.8 277.6 1578.9 275.9 1576.0 274.2 1568.6 269.8 1561.3 265.7 1553.8 261.8 1546.1 258.4 1538.3 255.5 1530.3 253.1 1522.3 251.2 1514.1 249.9 1505.8 249.2 1497.6 249.0 1489.4 249.5 1481.2 250.6 1473.2 252.2 1465.3 254.4 1457.7 257.0 1450.2 260.3 1443.0 264.0 1436.1 268.1 1429.5 272.7 1423.3 277.8 1417.4 283.2 1411.9 289.0 1406.8 295.1 1402.2 301.5 1398.0 308.3 1394.3 315.3 1391.1 322.5 1388.4 329.9 1386.2 337.4 1384.5 345.1 1383.3 352.8 1382.7 360.6 1382.6 368.4 1382.7 376.2 1383.3 384.0 1384.5 391.7 1386.2 399.4 1388.4 406.9 1391.1 414.3 1394.3 421.5 1398.0 428.5 1402.2 435.3 1406.8 441.7 1411.9 447.8 1417.4 453.6 1423.3 459.0 1429.5 464.1 1436.1 468.7 1443.0 472.8 1450.2 476.5 1457.7 479.8 1465.3 482.4 1473.2 484.6 1481.2 486.2 1489.4 487.3 1497.6 487.8 1505.8 487.6 1514.1 486.9 1522.3 485.6 1530.3 483.7 1538.3 481.3 1546.1 478.4 1553.8 475.0 1561.3 471.1 1568.6 467.0 1576.0 462.6 1578.9 460.9 1581.8 459.2 1584.7 457.5 1587.6 455.7 1590.7 454.0 1593.8 452.2 1597.9 451.2 1602.7 450.6 1605.1 452.4 1638.6 452.4 1638.6 284.4 1605.1 284.4Z" fill="#ffa01e"/>
<path d="M1605.5 290.0 1599.8 289.9 1594.8 289.5 1591.3 288.1 1588.0 286.6 1584.9 285.1 1581.9 283.6 1578.9 282.1 1576.0 280.6 1568.6 276.6 1561.3 272.7 1554.0 269.1 1546.6 265.9 1539.0 263.2 1531.4 260.9 1523.7 259.1 1515.9 257.8 1508.0 257.0 1500.2 256.8 1492.4 257.2 1484.6 258.1 1477.0 259.6 1469.5 261.5 1462.2 264.0 1455.1 266.9 1448.3 270.3 1441.7 274.1 1435.4 278.4 1429.4 283.1 1423.8 288.1 1418.5 293.5 1413.7 299.3 1409.3 305.4 1405.3 311.7 1401.7 318.3 1398.7 325.1 1396.1 332.0 1394.0 339.1 1392.4 346.4 1391.3 353.7 1390.7 361.0 1390.6 368.4 1390.7 375.8 1391.3 383.1 1392.4 390.4 1394.0 397.7 1396.1 404.8 1398.7 411.7 1401.7 418.5 1405.3 425.1 1409.3 431.4 1413.7 437.5 1418.5 443.3 1423.8 448.7 1429.4 453.7 1435.4 458.4 1441.7 462.7 1448.3 466.5 1455.1 469.9 1462.2 472.8 1469.5 475.3 1477.0 477.2 1484.6 478.7 1492.4 479.6 1500.2 480.0 1508.0 479.8 1515.9 479.0 1523.7 477.7 1531.4 475.9 1539.0 473.6 1546.6 470.9 1554.0 467.7 1561.3 464.1 1568.6 460.2 1576.0 456.2 1578.9 454.7 1581.9 453.2 1584.9 451.7 1588.0 450.2 1591.3 448.7 1594.8 447.3 1599.8 446.9 1605.5 446.8 1607.9 448.5 1638.6 448.5 1638.6 288.3 1607.9 288.3Z" fill="#ffbc28"/>
<path d="M1608.8 294.9 1602.4 295.0 1596.6 295.0 1592.4 294.1 1588.8 292.9 1585.4 291.7 1582.2 290.4 1579.1 289.2 1576.1 287.9 1568.4 284.4 1561.2 280.8 1554.0 277.5 1546.8 274.6 1539.6 272.1 1532.3 270.0 1525.0 268.4 1517.6 267.2 1510.3 266.4 1502.9 266.2 1495.6 266.4 1488.4 267.1 1481.2 268.3 1474.2 269.9 1467.3 272.0 1460.6 274.6 1454.1 277.6 1447.9 281.0 1441.9 284.9 1436.3 289.1 1430.9 293.8 1425.9 298.7 1421.4 304.1 1417.2 309.7 1413.4 315.6 1410.0 321.7 1407.1 328.0 1404.7 334.5 1402.7 341.1 1401.2 347.9 1400.2 354.7 1399.7 361.5 1399.6 368.4 1399.7 375.3 1400.2 382.1 1401.2 388.9 1402.7 395.7 1404.7 402.3 1407.1 408.8 1410.0 415.1 1413.4 421.2 1417.2 427.1 1421.4 432.7 1425.9 438.1 1430.9 443.0 1436.3 447.7 1441.9 451.9 1447.9 455.8 1454.1 459.2 1460.6 462.2 1467.3 464.8 1474.2 466.9 1481.2 468.5 1488.4 469.7 1495.6 470.4 1502.9 470.6 1510.3 470.4 1517.6 469.6 1525.0 468.4 1532.3 466.8 1539.6 464.7 1546.8 462.2 1554.0 459.3 1561.2 456.0 1568.4 452.4 1576.1 448.9 1579.1 447.6 1582.2 446.4 1585.4 445.1 1588.8 443.9 1592.4 442.7 1596.6 441.8 1602.4 441.8 1608.8 441.9 1611.3 443.6 1638.6 443.6 1638.6 293.2 1611.3 293.2Z" fill="#ffd83c"/>
<path d="M1612.5 300.9 1606.0 300.8 1599.9 300.7 1594.7 300.3 1590.5 299.4 1586.7 298.5 1582.9 297.7 1579.4 296.8 1576.1 296.0 1567.6 293.4 1560.2 290.4 1553.1 287.6 1546.1 285.2 1539.2 283.3 1532.3 281.6 1525.4 280.4 1518.7 279.5 1512.0 278.9 1505.3 278.7 1498.7 278.8 1492.2 279.3 1485.8 280.2 1479.4 281.5 1473.2 283.2 1467.1 285.3 1461.3 287.9 1455.6 290.8 1450.1 294.1 1445.0 297.8 1440.1 301.8 1435.5 306.1 1431.2 310.8 1427.4 315.8 1423.8 321.0 1420.7 326.4 1418.0 332.1 1415.7 337.9 1413.8 343.8 1412.3 349.9 1411.3 356.0 1410.7 362.2 1410.6 368.4 1410.7 374.6 1411.3 380.8 1412.3 386.9 1413.8 393.0 1415.7 398.9 1418.0 404.7 1420.7 410.4 1423.8 415.8 1427.4 421.0 1431.2 426.0 1435.5 430.7 1440.1 435.0 1445.0 439.0 1450.1 442.7 1455.6 446.0 1461.3 448.9 1467.1 451.5 1473.2 453.6 1479.4 455.3 1485.8 456.6 1492.2 457.5 1498.7 458.0 1505.3 458.1 1512.0 457.9 1518.7 457.3 1525.4 456.4 1532.3 455.2 1539.2 453.5 1546.1 451.6 1553.1 449.2 1560.2 446.4 1567.6 443.4 1576.1 440.8 1579.4 440.0 1582.9 439.1 1586.7 438.3 1590.5 437.4 1594.7 436.5 1599.9 436.1 1606.0 436.0 1612.5 435.9 1615.1 437.4 1638.6 437.4 1638.6 299.4 1615.1 299.4Z" fill="#ffe850"/>
<path d="M1616.9 309.2 1611.4 308.1 1605.0 307.8 1597.8 308.2 1588.8 310.2 1580.5 312.2 1575.2 312.7 1571.0 312.6 1567.7 312.1 1560.5 309.3 1553.9 306.7 1547.3 304.7 1540.9 303.2 1534.8 301.9 1528.8 300.8 1523.0 300.3 1517.2 300.2 1511.7 300.3 1506.3 300.6 1501.1 300.9 1496.0 301.1 1491.0 301.3 1486.0 301.9 1481.0 302.9 1476.1 304.2 1471.4 305.8 1466.8 307.9 1462.3 310.2 1458.1 312.9 1454.0 315.9 1450.2 319.1 1446.6 322.7 1443.3 326.5 1440.3 330.5 1437.6 334.8 1435.3 339.2 1433.3 343.8 1431.6 348.6 1430.3 353.4 1429.4 358.4 1428.8 363.4 1428.6 368.4 1428.8 373.4 1429.4 378.4 1430.3 383.4 1431.6 388.2 1433.3 393.0 1435.3 397.6 1437.6 402.0 1440.3 406.3 1443.3 410.3 1446.6 414.1 1450.2 417.7 1454.0 420.9 1458.1 423.9 1462.3 426.6 1466.8 428.9 1471.4 431.0 1476.1 432.6 1481.0 433.9 1486.0 434.9 1491.0 435.5 1496.0 435.7 1501.1 435.9 1506.3 436.2 1511.7 436.5 1517.2 436.6 1523.0 436.5 1528.8 436.0 1534.8 434.9 1540.9 433.6 1547.3 432.1 1553.9 430.1 1560.5 427.5 1567.7 424.7 1571.0 424.2 1575.2 424.1 1580.5 424.6 1588.8 426.6 1597.8 428.6 1605.0 429.0 1611.4 428.7 1616.9 427.6 1619.6 428.9 1638.6 428.9 1638.6 307.9 1619.6 307.9Z" fill="#ffff78"/>
</g>
<circle cx="1495.6" cy="368.4" r="135.4" fill="none" stroke="#808080" stroke-width="2.4"/>
<rect x="1455" y="368" width="41" height="1.3" fill="#000080" shape-rendering="crispEdges"/><rect x="1495" y="328" width="1.2" height="41" fill="#800000" shape-rendering="crispEdges"/>
</svg>
<!-- ===== window 2 ===== -->
<div class="win" style="left:996.0px;top:562.0px;width:924.5px;height:492.5px;border:1px solid #0078d7"></div>
<div class="a" style="left:996.5px;top:563.0px;width:923.5px;height:31px;background:#0078d7"></div>
<svg class="a" style="left:1005.5px;top:571.0px" width="18" height="15"><rect x="1.500" y="1" width="14" height="12" fill="#fafafa" stroke="#b4b8bc"/><rect x="3" y="3" width="5.500" height="8" fill="#4a9a6a"/><rect x="3" y="3" width="5.500" height="3" fill="#5a8ab0"/><rect x="9.500" y="3" width="3" height="8" fill="#e0e0e0"/><rect x="13" y="3" width="2" height="4" fill="#6aa0a0"/></svg>
<div class="t" style="left:1026.5px;top:573.7px;font-size:11.8px;color:#fff">Вогнестійкість елемента</div>
<svg class="a" style="left:1896.5px;top:571.0px" width="14" height="14"><path d="M1.500 1.500l10 10M11.500 1.500l-10 10" stroke="#fff" stroke-width="1.100"/></svg>
<div class="tb" style="left:1001.0px;top:597.7px"><svg width="47" height="47" viewBox="0 0 47 47"><text x="12.2" y="32.8" font-family="Liberation Serif,serif" font-weight="bold" font-size="41" fill="url(#gBr)" textLength="11.5" lengthAdjust="spacingAndGlyphs">t</text><text x="25.7" y="36.2" font-family="Liberation Serif,serif" font-weight="bold" font-size="21" fill="url(#gBr)" textLength="9.3" lengthAdjust="spacingAndGlyphs">b</text></svg></div>
<div class="tb" style="left:1051.0px;top:597.7px"><svg width="47" height="47" viewBox="0 0 47 47"><text x="7.8" y="32.6" font-family="Liberation Serif,serif" font-weight="bold" font-size="27.5" fill="url(#gBr)" textLength="15" lengthAdjust="spacingAndGlyphs">R</text><text x="23.7" y="36.2" font-family="Liberation Serif,serif" font-weight="bold" font-size="17" fill="url(#gBr)" textLength="16" lengthAdjust="spacingAndGlyphs">b,n</text></svg></div>
<div class="tb p" style="left:1101.0px;top:597.7px"><svg width="47" height="47" viewBox="0 0 47 47"><text x="7.8" y="32.6" font-family="Liberation Serif,serif" font-weight="bold" font-size="27.5" fill="url(#gBr)" textLength="14" lengthAdjust="spacingAndGlyphs">R</text><text x="21.3" y="36.2" font-family="Liberation Serif,serif" font-weight="bold" font-size="17" fill="url(#gBr)" textLength="18" lengthAdjust="spacingAndGlyphs">bt,n</text></svg><div class="a" style="left:3px;top:3px;width:40px;height:40px;border:1px dotted #000"></div></div>
<div class="tb" style="left:1151.0px;top:597.7px"><svg width="47" height="47" viewBox="0 0 47 47"><text x="10" y="32.6" font-family="Liberation Serif,serif" font-weight="bold" font-size="28" fill="url(#gBr)" textLength="15.5" lengthAdjust="spacingAndGlyphs">E</text><text x="26.4" y="36.2" font-family="Liberation Serif,serif" font-weight="bold" font-size="21" fill="url(#gBr)" textLength="10" lengthAdjust="spacingAndGlyphs">b</text></svg></div>
<div class="tb" style="left:1206.5px;top:597.7px"><svg width="47" height="47" viewBox="0 0 47 47"><text x="12.7" y="32.8" font-family="Liberation Serif,serif" font-weight="bold" font-size="41" fill="url(#gBr)" textLength="11.5" lengthAdjust="spacingAndGlyphs">t</text><text x="26.2" y="36.2" font-family="Liberation Serif,serif" font-weight="bold" font-size="21" fill="url(#gBr)" textLength="7.5" lengthAdjust="spacingAndGlyphs">s</text></svg></div>
<div class="tb" style="left:1256.5px;top:597.7px"><svg width="47" height="47" viewBox="0 0 47 47"><text x="7.8" y="32.6" font-family="Liberation Serif,serif" font-weight="bold" font-size="27.5" fill="url(#gBr)" textLength="15" lengthAdjust="spacingAndGlyphs">R</text><text x="24.5" y="36.2" font-family="Liberation Serif,serif" font-weight="bold" font-size="17" fill="url(#gBr)" textLength="14.7" lengthAdjust="spacingAndGlyphs">s,n</text></svg></div>
<div class="tb" style="left:1306.5px;top:597.7px"><svg width="47" height="47" viewBox="0 0 47 47"><text x="7.8" y="32.6" font-family="Liberation Serif,serif" font-weight="bold" font-size="27.5" fill="url(#gBr)" textLength="13.5" lengthAdjust="spacingAndGlyphs">R</text><text x="21" y="36.2" font-family="Liberation Serif,serif" font-weight="bold" font-size="17" fill="url(#gBr)" textLength="18.4" lengthAdjust="spacingAndGlyphs">sc,n</text></svg></div>
<div class="tb" style="left:1356.5px;top:597.7px"><svg width="47" height="47" viewBox="0 0 47 47"><text x="9.5" y="32.6" font-family="Liberation Serif,serif" font-weight="bold" font-size="28" fill="url(#gBr)" textLength="15.5" lengthAdjust="spacingAndGlyphs">E</text><text x="26.7" y="36.2" font-family="Liberation Serif,serif" font-weight="bold" font-size="21" fill="url(#gBr)" textLength="9.8" lengthAdjust="spacingAndGlyphs">s</text></svg></div>
<div class="tb" style="left:1412.5px;top:597.7px"><svg width="47" height="47" viewBox="0 0 47 47"><rect x="10" y="9" width="12" height="12" fill="#e8924a"/><rect x="22" y="9" width="13" height="12" fill="url(#gTM)"/><rect x="10" y="21" width="12" height="11" fill="#b03030" opacity=".75"/><path d="M10 21h25M22 9v14" stroke="#8a4a2a" stroke-width=".8"/><text x="13.5" y="33" font-size="15" fill="#222" font-family="Liberation Sans,sans-serif">t</text><path d="M18 38l10-20" stroke="#222" stroke-width="1.4"/><text x="25" y="39" font-size="18" fill="#222" font-family="Liberation Sans,sans-serif">M</text></svg></div>
<div class="tb" style="left:1462.5px;top:597.7px"><svg width="47" height="47" viewBox="0 0 47 47"><path d="M9 16l9-6h13l-9 6z" fill="#e4e4e4" stroke="#aaa" stroke-width=".7"/><path d="M22 16l9-6v13l-9 7z" fill="#d0e4ec" stroke="#aaa" stroke-width=".7"/><rect x="9" y="16" width="13" height="4" fill="#f0a0b0"/><rect x="9" y="20" width="13" height="10" fill="#f4e4e4"/><text x="8" y="34" font-size="16" fill="#a09898" font-family="Liberation Sans,sans-serif">X</text><path d="M20 40l10-20" stroke="#a09898" stroke-width="1.3"/><text x="27" y="40" font-size="16" fill="#a09898" font-family="Liberation Sans,sans-serif">Y</text></svg></div>
<div class="tb" style="left:1512.5px;top:597.7px"><svg width="47" height="47" viewBox="0 0 47 47"><g><rect x="9" y="10" width="4" height="4" fill="#e02020"/><rect x="13" y="10" width="4" height="4" fill="#ff9000"/><rect x="17" y="10" width="4" height="4" fill="#e8e000"/><rect x="21" y="10" width="4" height="4" fill="#2080e0"/><rect x="25" y="10" width="4" height="4" fill="#2a2a9a"/><rect x="9.5" y="10.5" width="20" height="3.5" fill="none" stroke="#333" stroke-width=".6"/></g><path d="M13 33l19-20" stroke="#223" stroke-width="1.3"/><g><rect x="33" y="17" width="4" height="4" fill="#2a2a9a"/><rect x="33" y="21" width="4" height="4" fill="#2080e0"/><rect x="33" y="25" width="4" height="4" fill="#30b030"/><rect x="33" y="29" width="4" height="4" fill="#ff9000"/><rect x="33" y="33" width="4" height="4" fill="#e02020"/></g></svg></div>
<div class="tb" style="left:1562.5px;top:597.7px"><svg width="47" height="47" viewBox="0 0 47 47"><path d="M9 16l9-6h13l-9 6z" fill="#e4e4e4" stroke="#aaa" stroke-width=".7"/><path d="M22 16l9-6v13l-9 7z" fill="#d0e4ec" stroke="#aaa" stroke-width=".7"/><rect x="9" y="16" width="13" height="4" fill="#f0a0b0"/><rect x="9" y="20" width="13" height="10" fill="#f4e4e4"/><text x="16" y="34" font-size="16" fill="#e08098" font-family="Liberation Sans,sans-serif">!</text><path d="M20 39l9-18" stroke="#b0a0a0" stroke-width="1.2"/><text x="28" y="40" font-size="16" fill="#e08098" font-family="Liberation Sans,sans-serif">?</text></svg></div>
<div class="tb" style="left:1612.5px;top:597.7px"><svg width="47" height="47" viewBox="0 0 47 47"><rect x="10.5" y="10.5" width="27" height="27" fill="#e8924a" stroke="#2a2a5a" stroke-width="1"/><path d="M22 11c6 6 6 10 15 12v-12z" fill="#fff0a0" stroke="#2a2a5a" stroke-width=".7"/><path d="M37.500 23c-5 2-8 6-7 14h7z" fill="#fff0a0" stroke="#2a2a5a" stroke-width=".7"/><path d="M10.500 26c5 1 9 5 10 11.500h-10z" fill="#b03828" stroke="#2a2a5a" stroke-width=".7"/><text x="19" y="24" font-size="14" fill="#2a2a3a" font-family="Liberation Sans,sans-serif">2</text><text x="19" y="36" font-size="14" fill="#2a2a3a" font-family="Liberation Sans,sans-serif">6</text></svg></div>
<div class="tb" style="left:1662.5px;top:597.7px"><svg width="47" height="47" viewBox="0 0 47 47"><g stroke="#777" stroke-width=".6"><rect x="9" y="21" width="4" height="5" fill="#fff080"/><rect x="13" y="21" width="4" height="5" fill="#ffe060"/><rect x="17" y="21" width="4" height="5" fill="#ffa030"/><rect x="21" y="21" width="4" height="5" fill="#c03818"/><rect x="25" y="21" width="4" height="5" fill="#ff9838"/><rect x="29" y="21" width="4" height="5" fill="#ffe060"/><rect x="33" y="21" width="4" height="5" fill="#fff080"/></g></svg></div>
<div class="tb" style="left:1718.5px;top:597.7px"><svg width="47" height="47" viewBox="0 0 47 47"><path d="M12.5 8.5h18l6 6v23h-24z" fill="#f4f4f6" stroke="#aaa"/><path d="M30.500 8.500v6h6" fill="#fff" stroke="#aaa" stroke-width=".8"/><path d="M14 26h12M14 29h12M14 32h12" stroke="#9898c8" stroke-width="1"/><text x="14" y="32" font-family="Liberation Serif,serif" font-weight="bold" font-size="25" fill="#c81820">T</text><rect x="28" y="13" width="4" height="17" rx="2" fill="#fff" stroke="#8898b8"/><rect x="29.300" y="19" width="1.600" height="12" fill="#d02020"/><circle cx="30" cy="32.500" r="3.600" fill="#d02020" stroke="#8898b8" stroke-width=".8"/></svg></div>
<div class="tb" style="left:1768.5px;top:597.7px"><svg width="47" height="47" viewBox="0 0 47 47"><path d="M9 17l5-5 4 1 2-2 8 2v3l8 2v16l-22 5-5-3z" fill="#e6e6e6" stroke="#777" stroke-width=".9"/><path d="M14 21l22-3" stroke="#999" stroke-width=".7"/><circle cx="22" cy="28" r="6.200" fill="#888" stroke="#444"/><circle cx="22" cy="28" r="3.500" fill="#222"/><circle cx="20.500" cy="26.500" r="1.100" fill="#fff"/><rect x="29" y="20" width="4" height="2.500" fill="#bbb" transform="rotate(10 31 21)"/></svg></div>
<div class="tb" style="left:1818.5px;top:597.7px"><svg width="47" height="47" viewBox="0 0 47 47"><text x="24" y="39" font-family="Liberation Serif,serif" font-weight="bold" font-size="40" fill="#2e6a2e" text-anchor="middle">?</text></svg></div>
<div class="tb" style="left:1868.5px;top:597.7px"><svg width="47" height="47" viewBox="0 0 47 47"><path d="M9.6 28.1L14.8 25.6L20.7 32L36.3 10.4V21.5L20 38.5Z" fill="#2c6a24"/></svg></div>
<div class="canvas" style="left:1020.0px;top:649.3px;width:883px;height:389px"></div>
<div class="lg" style="left:1029.5px;top:657.5px">Rbtn, MPa</div>
<div class="lg" style="left:1029.5px;top:673.5px">Ізополя</div>
<svg class="a" style="left:1166.5px;top:669.5px" width="660" height="14"><rect x="6.2" y="1.7" width="81" height="9.8" fill="#ffff78" stroke="#808080" stroke-width="1"/><rect x="87.1" y="1.7" width="81" height="9.8" fill="#ffe850" stroke="#808080" stroke-width="1"/><rect x="168.0" y="1.7" width="81" height="9.8" fill="#ffd83c" stroke="#808080" stroke-width="1"/><rect x="248.9" y="1.7" width="81" height="9.8" fill="#ffbc28" stroke="#808080" stroke-width="1"/><rect x="329.8" y="1.7" width="81" height="9.8" fill="#ffa01e" stroke="#808080" stroke-width="1"/><rect x="410.7" y="1.7" width="81" height="9.8" fill="#ff6600" stroke="#808080" stroke-width="1"/><rect x="491.6" y="1.7" width="81" height="9.8" fill="#c82800" stroke="#808080" stroke-width="1"/><rect x="572.5" y="1.7" width="81" height="9.8" fill="#800000" stroke="#808080" stroke-width="1"/></svg>
<div class="lv" style="left:1172.7px;top:683.0px">0.10</div>
<div class="lv" style="left:1253.6px;top:683.0px">0.34</div>
<div class="lv" style="left:1334.5px;top:683.0px">0.57</div>
<div class="lv" style="left:1415.4px;top:683.0px">0.81</div>
<div class="lv" style="left:1496.3px;top:683.0px">1.04</div>
<div class="lv" style="left:1577.2px;top:683.0px">1.28</div>
<div class="lv" style="left:1658.1px;top:683.0px">1.51</div>
<div class="lv" style="left:1739.0px;top:683.0px">1.75</div>
<div class="lv" style="left:1819.9px;top:683.0px">1.98</div>
<svg class="a" style="left:0;top:0;pointer-events:none" width="1920" height="1080">
<clipPath id="cc2"><circle cx="1497.1" cy="877.9" r="135.0"/></clipPath>
<g clip-path="url(#cc2)">
<circle cx="1497.1" cy="877.9" r="137.0" fill="#ffff78"/>
<path d="M1599.8 790.2 1593.8 790.8 1589.7 790.0 1585.8 789.2 1582.2 788.3 1578.7 787.3 1575.4 786.3 1572.2 785.2 1569.1 784.0 1561.5 781.0 1554.1 778.3 1546.6 775.9 1539.2 774.0 1531.7 772.5 1524.3 771.3 1516.9 770.5 1509.6 769.9 1502.3 769.7 1495.0 769.6 1487.7 770.0 1480.4 770.9 1473.2 772.3 1466.2 774.1 1459.3 776.4 1452.5 779.2 1445.9 782.4 1439.6 786.1 1433.6 790.1 1427.8 794.6 1422.3 799.5 1417.2 804.7 1412.4 810.2 1408.0 816.0 1404.0 822.2 1400.4 828.5 1397.3 835.2 1394.6 842.0 1392.3 848.9 1390.6 856.0 1389.3 863.3 1388.4 870.6 1388.1 877.9 1388.4 885.2 1389.3 892.5 1390.6 899.8 1392.3 906.9 1394.6 913.8 1397.3 920.6 1400.4 927.3 1404.0 933.6 1408.0 939.8 1412.4 945.6 1417.2 951.1 1422.3 956.3 1427.8 961.2 1433.6 965.7 1439.6 969.7 1445.9 973.4 1452.5 976.6 1459.3 979.4 1466.2 981.7 1473.2 983.5 1480.4 984.9 1487.7 985.8 1495.0 986.2 1502.3 986.1 1509.6 985.9 1516.9 985.3 1524.3 984.5 1531.7 983.3 1539.2 981.8 1546.6 979.9 1554.1 977.5 1561.5 974.8 1569.1 971.8 1572.2 970.6 1575.4 969.5 1578.7 968.5 1582.2 967.5 1585.8 966.6 1589.7 965.8 1593.8 965.0 1599.8 965.6 1602.0 967.5 1640.1 967.5 1640.1 788.3 1602.0 788.3Z" fill="#ffe850"/>
<path d="M1602.0 792.9 1595.4 793.9 1590.8 793.5 1586.7 792.9 1582.8 792.2 1579.1 791.5 1575.7 790.7 1572.4 789.8 1569.2 788.9 1561.5 786.3 1554.0 783.9 1546.5 782.0 1539.2 780.6 1531.9 779.4 1524.7 778.6 1517.7 778.1 1510.7 777.7 1503.8 777.6 1496.9 777.5 1490.1 777.7 1483.3 778.5 1476.5 779.6 1469.9 781.3 1463.4 783.3 1457.0 785.8 1450.8 788.8 1444.8 792.1 1439.1 795.9 1433.6 800.0 1428.4 804.5 1423.6 809.3 1419.0 814.5 1414.9 819.9 1411.1 825.7 1407.7 831.6 1404.7 837.8 1402.1 844.2 1399.9 850.7 1398.2 857.4 1397.0 864.1 1396.1 871.0 1395.8 877.9 1396.1 884.8 1397.0 891.7 1398.2 898.4 1399.9 905.1 1402.1 911.6 1404.7 918.0 1407.7 924.2 1411.1 930.1 1414.9 935.9 1419.0 941.3 1423.6 946.5 1428.4 951.3 1433.6 955.8 1439.1 959.9 1444.8 963.7 1450.8 967.0 1457.0 970.0 1463.4 972.5 1469.9 974.5 1476.5 976.2 1483.3 977.3 1490.1 978.1 1496.9 978.3 1503.8 978.2 1510.7 978.1 1517.7 977.7 1524.7 977.2 1531.9 976.4 1539.2 975.2 1546.5 973.8 1554.0 971.9 1561.5 969.5 1569.2 966.9 1572.4 966.0 1575.7 965.1 1579.1 964.3 1582.8 963.6 1586.7 962.9 1590.8 962.3 1595.4 961.9 1602.0 962.9 1604.3 964.7 1640.1 964.7 1640.1 791.1 1604.3 791.1Z" fill="#ffd83c"/>
<path d="M1604.2 795.7 1597.4 796.7 1592.1 796.8 1587.6 796.4 1583.4 796.0 1579.4 795.6 1575.7 795.0 1572.2 794.4 1568.9 793.8 1561.0 791.7 1553.5 789.6 1546.2 788.1 1538.9 786.9 1531.9 786.0 1525.0 785.5 1518.2 785.1 1511.6 784.9 1505.1 784.8 1498.7 784.8 1492.2 784.9 1485.8 785.5 1479.5 786.5 1473.2 787.9 1467.1 789.8 1461.1 792.0 1455.2 794.7 1449.6 797.8 1444.2 801.3 1439.0 805.1 1434.1 809.2 1429.5 813.7 1425.2 818.5 1421.2 823.6 1417.6 828.9 1414.4 834.5 1411.5 840.3 1409.1 846.3 1407.0 852.4 1405.4 858.6 1404.2 865.0 1403.4 871.4 1403.1 877.9 1403.4 884.4 1404.2 890.8 1405.4 897.2 1407.0 903.4 1409.1 909.5 1411.5 915.5 1414.4 921.3 1417.6 926.9 1421.2 932.2 1425.2 937.3 1429.5 942.1 1434.1 946.6 1439.0 950.7 1444.2 954.5 1449.6 958.0 1455.2 961.1 1461.1 963.8 1467.1 966.0 1473.2 967.9 1479.5 969.3 1485.8 970.3 1492.2 970.9 1498.7 971.0 1505.1 971.0 1511.6 970.9 1518.2 970.7 1525.0 970.3 1531.9 969.8 1538.9 968.9 1546.2 967.7 1553.5 966.2 1561.0 964.1 1568.9 962.0 1572.2 961.4 1575.7 960.8 1579.4 960.2 1583.4 959.8 1587.6 959.4 1592.1 959.0 1597.4 959.1 1604.2 960.1 1606.6 961.9 1640.1 961.9 1640.1 793.9 1606.6 793.9Z" fill="#ffbc28"/>
<path d="M1606.3 798.5 1599.0 799.7 1593.1 800.2 1588.2 800.1 1583.6 800.0 1579.4 799.8 1575.4 799.6 1571.7 799.3 1568.3 798.9 1560.2 797.1 1552.7 795.4 1545.4 794.2 1538.4 793.3 1531.5 792.8 1524.9 792.4 1518.4 792.3 1512.2 792.2 1506.1 792.3 1500.1 792.3 1494.1 792.4 1488.2 792.8 1482.2 793.6 1476.4 794.8 1470.6 796.5 1465.0 798.5 1459.6 800.9 1454.3 803.7 1449.2 806.9 1444.3 810.4 1439.7 814.2 1435.4 818.3 1431.3 822.7 1427.6 827.4 1424.2 832.3 1421.1 837.5 1418.4 842.9 1416.0 848.4 1414.1 854.1 1412.5 859.9 1411.3 865.8 1410.5 871.8 1410.1 877.9 1410.5 884.0 1411.3 890.0 1412.5 895.9 1414.1 901.7 1416.0 907.4 1418.4 912.9 1421.1 918.3 1424.2 923.5 1427.6 928.4 1431.3 933.1 1435.4 937.5 1439.7 941.6 1444.3 945.4 1449.2 948.9 1454.3 952.1 1459.6 954.9 1465.0 957.3 1470.6 959.3 1476.4 961.0 1482.2 962.2 1488.2 963.0 1494.1 963.4 1500.1 963.5 1506.1 963.5 1512.2 963.6 1518.4 963.5 1524.9 963.4 1531.5 963.0 1538.4 962.5 1545.4 961.6 1552.7 960.4 1560.2 958.7 1568.3 956.9 1571.7 956.5 1575.4 956.2 1579.4 956.0 1583.6 955.8 1588.2 955.7 1593.1 955.6 1599.0 956.1 1606.3 957.3 1608.7 959.0 1640.1 959.0 1640.1 796.8 1608.7 796.8Z" fill="#ffa01e"/>
<path d="M1608.6 801.8 1601.0 803.0 1594.4 803.8 1589.0 804.0 1584.0 804.2 1579.2 804.5 1574.8 804.7 1570.8 804.7 1567.1 804.6 1559.0 803.2 1551.6 801.8 1544.5 800.7 1537.6 800.1 1531.0 799.7 1524.7 799.5 1518.6 799.4 1512.8 799.5 1507.1 799.5 1501.5 799.6 1495.9 799.6 1490.4 799.9 1484.9 800.6 1479.5 801.6 1474.1 803.0 1468.9 804.9 1463.8 807.0 1458.9 809.5 1454.1 812.4 1449.6 815.6 1445.3 819.1 1441.3 822.9 1437.5 827.0 1434.0 831.3 1430.8 835.8 1428.0 840.6 1425.5 845.6 1423.3 850.7 1421.5 855.9 1420.1 861.3 1419.1 866.8 1418.4 872.3 1418.1 877.9 1418.4 883.5 1419.1 889.0 1420.1 894.5 1421.5 899.9 1423.3 905.1 1425.5 910.2 1428.0 915.2 1430.8 920.0 1434.0 924.5 1437.5 928.8 1441.3 932.9 1445.3 936.7 1449.6 940.2 1454.1 943.4 1458.9 946.3 1463.8 948.8 1468.9 950.9 1474.1 952.8 1479.5 954.2 1484.9 955.2 1490.4 955.9 1495.9 956.2 1501.5 956.2 1507.1 956.3 1512.8 956.3 1518.6 956.4 1524.7 956.3 1531.0 956.1 1537.6 955.7 1544.5 955.1 1551.6 954.0 1559.0 952.6 1567.1 951.2 1570.8 951.1 1574.8 951.1 1579.2 951.3 1584.0 951.6 1589.0 951.8 1594.4 952.0 1601.0 952.8 1608.6 954.0 1611.1 955.7 1640.1 955.7 1640.1 800.1 1611.1 800.1Z" fill="#ff6600"/>
<path d="M1618.7 819.4 1613.7 818.0 1608.3 817.0 1602.6 816.5 1596.6 816.4 1590.2 817.0 1582.5 818.8 1574.5 821.3 1567.5 823.5 1557.3 823.6 1550.3 822.2 1544.1 820.6 1538.4 819.0 1533.0 817.5 1527.7 816.4 1522.4 815.7 1517.2 815.3 1512.1 815.2 1507.2 815.2 1502.4 815.3 1497.7 815.3 1493.0 815.4 1488.3 815.9 1483.7 816.8 1479.1 817.9 1474.7 819.5 1470.3 821.3 1466.2 823.5 1462.1 826.0 1458.3 828.7 1454.8 831.8 1451.4 835.1 1448.3 838.7 1445.5 842.4 1443.0 846.4 1440.8 850.6 1438.9 854.9 1437.3 859.3 1436.1 863.9 1435.2 868.5 1434.7 873.2 1434.5 877.9 1434.7 882.6 1435.2 887.3 1436.1 891.9 1437.3 896.5 1438.9 900.9 1440.8 905.2 1443.0 909.4 1445.5 913.4 1448.3 917.1 1451.4 920.7 1454.8 924.0 1458.3 927.1 1462.1 929.8 1466.2 932.3 1470.3 934.5 1474.7 936.3 1479.1 937.9 1483.7 939.0 1488.3 939.9 1493.0 940.4 1497.7 940.5 1502.4 940.5 1507.2 940.6 1512.1 940.6 1517.2 940.5 1522.4 940.1 1527.7 939.4 1533.0 938.3 1538.4 936.8 1544.1 935.2 1550.3 933.6 1557.3 932.2 1567.5 932.3 1574.5 934.5 1582.5 937.0 1590.2 938.8 1596.6 939.4 1602.6 939.3 1608.3 938.8 1613.7 937.8 1618.7 936.4 1621.4 937.7 1640.1 937.7 1640.1 818.1 1621.4 818.1Z" fill="#c82800"/>
<path d="M1628.2 845.7 1597.0 850.6 1572.7 855.1 1561.0 856.8 1556.8 856.4 1553.7 855.8 1551.2 855.2 1549.2 854.4 1547.5 853.5 1542.1 851.4 1537.1 849.8 1532.4 848.5 1528.1 847.4 1524.2 846.6 1520.5 845.9 1517.1 845.3 1513.8 844.8 1510.7 844.4 1507.7 844.2 1504.8 844.2 1501.9 844.3 1499.1 844.6 1496.4 845.0 1493.8 845.7 1491.3 846.6 1488.9 847.6 1486.6 848.8 1484.4 850.2 1482.4 851.6 1480.5 853.2 1478.8 854.9 1477.1 856.7 1475.7 858.6 1474.4 860.6 1473.3 862.6 1472.3 864.7 1471.6 866.9 1470.9 869.0 1470.5 871.3 1470.2 873.5 1470.1 875.7 1470.1 877.9 1470.1 880.1 1470.2 882.3 1470.5 884.5 1470.9 886.8 1471.6 888.9 1472.3 891.1 1473.3 893.2 1474.4 895.2 1475.7 897.2 1477.1 899.1 1478.8 900.9 1480.5 902.6 1482.4 904.2 1484.4 905.6 1486.6 907.0 1488.9 908.2 1491.3 909.2 1493.8 910.1 1496.4 910.8 1499.1 911.2 1501.9 911.5 1504.8 911.6 1507.7 911.6 1510.7 911.4 1513.8 911.0 1517.1 910.5 1520.5 909.9 1524.2 909.2 1528.1 908.4 1532.4 907.3 1537.1 906.0 1542.1 904.4 1547.5 902.3 1549.2 901.4 1551.2 900.6 1553.7 900.0 1556.8 899.4 1561.0 899.0 1572.7 900.7 1597.0 905.2 1628.2 910.1 1631.1 910.8 1640.1 910.8 1640.1 845.0 1631.1 845.0Z" fill="#800000"/>
</g>
<circle cx="1497.1" cy="877.9" r="135.4" fill="none" stroke="#808080" stroke-width="2.4"/>
<rect x="1456" y="878" width="41" height="1.3" fill="#000080" shape-rendering="crispEdges"/><rect x="1496" y="838" width="1.2" height="41" fill="#6a0000" shape-rendering="crispEdges"/>
</svg><div class="a" style="left:1918.2px;top:53px;width:1.8px;height:492px;background:#0078d7"></div><!-- ===== bottom toolbar ===== -->
<div class="a" style="left:0;top:1006px;width:1000px;height:2px;background:#f0f2f4"></div>
<div id="btb" class="a"></div>
<div class="a" style="left:0;top:1055px;width:1345px;height:8px;background:linear-gradient(#4a4d56,#3a3d45)"></div>
<div class="a" style="left:995px;top:1006px;width:1.500px;height:50px;background:#e4e6e8"></div>
<svg class="a" style="left:0;top:1007px" width="1000" height="49" viewBox="0 1007 1000 49">
<defs>
 <radialGradient id="gLens" cx=".45" cy=".35" r=".75"><stop offset="0" stop-color="#fff"/><stop offset=".7" stop-color="#dce8f4"/><stop offset="1" stop-color="#a8c0dc"/></radialGradient>
 <radialGradient id="gGn2" cx=".4" cy=".35" r=".7"><stop offset="0" stop-color="#e8f0a0"/><stop offset="1" stop-color="#8aa830"/></radialGradient>
 <linearGradient id="gFun" x1="0" y1="0" x2="1" y2="0"><stop offset="0" stop-color="#9ab8c4"/><stop offset=".5" stop-color="#eef6f8"/><stop offset="1" stop-color="#8aa8b4"/></linearGradient>
</defs>
<path d="M4.500 1017v30" stroke="#222" stroke-width="1.600" stroke-dasharray="1.500 1.500"/>
<path d="M24 1022l6 2 5-3 1 6 9 1-5 5 1 6-8-2-7 1-1-6-8-4z" fill="none" stroke="#d08a8a" stroke-width="1.200" stroke-dasharray="2.500 1.500"/>
<g fill="#555"><path d="M105 1029h9l-4.500 5zM215 1029h9l-4.500 5zM413 1029h9l-4.500 5zM479 1029h9l-4.500 5zM545 1029h9l-4.500 5z"/></g>
<g id="lens"><circle cx="77.500" cy="1031" r="14.500" fill="url(#gLens)" stroke="#5a8ac8" stroke-width="1"/><circle cx="77.500" cy="1031" r="13.300" fill="none" stroke="#fff" stroke-width="1.200"/><path d="M88.500 1042l2.500 2.500" stroke="#eef2f6" stroke-width="2.600" stroke-linecap="round"/></g>
<path d="M66 1031h23M77.500 1019.500v23" stroke="#1d4064" stroke-width="2.600"/><circle cx="77.500" cy="1031" r="5.200" fill="url(#gGn2)"/>
<!-- grid nodes icon -->
<path d="M130 1020v24M141.500 1020v24M153.500 1020v24M130 1026h24M130 1039h24" stroke="#1d4064" stroke-width="1.600" fill="none"/><path d="M141.500 1020h12v14h-12z" fill="none" stroke="#e02020" stroke-width="1.800"/><g fill="#e02020" stroke="#fff" stroke-width=".6"><circle cx="141.500" cy="1020.500" r="2.600"/><circle cx="153.500" cy="1020.500" r="2.600"/><circle cx="141.500" cy="1034" r="2.600"/><circle cx="153.500" cy="1034" r="2.600"/></g><g fill="#6a9a40"><circle cx="130" cy="1020.500" r="2.200"/><circle cx="130" cy="1034" r="2.200"/></g>
<use href="#lens" x="110"/><path d="M177 1031h20" stroke="#1d4064" stroke-width="2.600"/><circle cx="177" cy="1031" r="3.600" fill="url(#gGn2)"/><circle cx="197" cy="1031" r="3.600" fill="url(#gGn2)"/>
<use href="#lens" x="173.500"/><path d="M247 1019.500v23M255 1019.500v23" stroke="#1d4064" stroke-width="3"/>
<use href="#lens" x="219.500"/><path d="M285.500 1027h23M285.500 1035h23" stroke="#1d4064" stroke-width="3"/>
<use href="#lens" x="262"/><path d="M339.500 1019v12M327 1031h25M339.500 1031l-8 10" stroke="#1d4064" stroke-width="2.600"/><circle cx="339.500" cy="1031" r="4.200" fill="url(#gGn2)"/>
<use href="#lens" x="308"/><path d="M380.500 1019.500v23M390.500 1019.500v23M374 1026h23M374 1036h23" stroke="#1d4064" stroke-width="2.200"/>
<use href="#lens" x="373.500"/><text x="451" y="1038" font-size="19" fill="#2a2a5a" text-anchor="middle" font-family="Liberation Sans,sans-serif">EF</text>
<use href="#lens" x="440"/><path d="M507 1021l21 20" stroke="#1d4064" stroke-width="4"/><path d="M515 1029l6 6" stroke="#e02020" stroke-width="2.600"/><path d="M521 1035l5 4.500" stroke="#e8d020" stroke-width="2.600"/>
<g transform="translate(0,-5.5)">
<!-- section -->
<path d="M569 1031l7-5v22l-7 4z" fill="#8aa0c8" stroke="#3a4a7a"/><path d="M576 1026l3 1v21l-3-0z" fill="#5a70a8"/><path d="M568 1046l12-5 16 1-12 6z" fill="#b8c860" stroke="#7a8a30" stroke-width=".8"/><rect x="585.500" y="1033" width="3.500" height="11" rx="1.700" fill="#d82858"/>
<!-- funnel -->
<path d="M611 1027h29l-12 13v10h-5v-10z" fill="url(#gFun)" stroke="#6a8a98" stroke-width="1"/><ellipse cx="625.500" cy="1027" rx="14.500" ry="2.200" fill="#eaf4f8" stroke="#6a8a98" stroke-width=".8"/>
<!-- swap -->
<rect x="659.500" y="1024.500" width="12" height="13" fill="none" stroke="#2a70d0" stroke-width="2"/><rect x="659.500" y="1038.500" width="12" height="12" fill="none" stroke="#d81868" stroke-width="2"/><path d="M676 1028c8 2 8 16 0 19" stroke="#2a8a2a" stroke-width="1.300" fill="none"/><path d="M674 1028l5-3-1 5zM674 1047l5 3-1-5z" fill="#2a8a2a"/>
<!-- rotate -->
<path d="M703 1033v19M727 1033v19M703 1033h24M703 1044h24" stroke="#1d4064" stroke-width="1.800" fill="none"/><rect x="703" y="1033" width="11" height="11" fill="none" stroke="#e02020" stroke-width="2"/><path d="M709 1029c2-8 14-8 16 1" stroke="#e02020" stroke-width="2.200" fill="none"/><path d="M708 1034l5 6 3-8z" fill="#c01818"/><g fill="#e02020" stroke="#fff" stroke-width=".5"><circle cx="703" cy="1033" r="2.300"/><circle cx="714" cy="1044" r="2.300"/><circle cx="703" cy="1044" r="2.300"/></g><g fill="#6a9a40"><circle cx="727" cy="1033" r="2.200"/><circle cx="727" cy="1044" r="2.200"/></g>
<!-- brush -->
<path d="M755 1038c0-6 2-8 2-13s5-5 5 0 2 7 2 13z" fill="#2a9a3a" stroke="#1a6a2a" stroke-width=".8"/><path d="M753 1038h13v4h-13z" fill="#3a3a4a"/><path d="M753 1042l-3 10h19l-3-10z" fill="#e8ecdc" stroke="#a8a890" stroke-width=".6"/><path d="M756 1043l-2 9M759.500 1043v9M763 1043l2 9" stroke="#a8a890" stroke-width=".7"/><path d="M742 1052.500h14" stroke="#e4e4e4" stroke-width="1.300"/>
<path d="M784 1025v28" stroke="#6a6e76" stroke-width="1"/><path d="M785 1025v28" stroke="#e4e6e8" stroke-width="1"/>
<!-- x boxes -->
<rect x="804.500" y="1025.500" width="12" height="13" fill="none" stroke="#2a70d0" stroke-width="2"/><rect x="804.500" y="1039.500" width="12" height="11" fill="none" stroke="#d81868" stroke-width="2"/><path d="M800 1024l21 14M821 1024l-21 14" stroke="#2a7a4a" stroke-width="1.200"/>
<path d="M842.500 1052v-24M842.500 1052h22" stroke="#9a9ea6" stroke-width="1.200" fill="none"/><path d="M842.500 1027l-2.500 5h5zM866 1052l-5-2.500v5z" fill="#9a9ea6"/><rect x="852.500" y="1027.500" width="9" height="9" fill="none" stroke="#7ab0d8" stroke-width="1.600"/><rect x="852.500" y="1038.500" width="9" height="9" fill="none" stroke="#e090b0" stroke-width="1.600"/><path d="M850 1026l14 10M864 1026l-14 10" stroke="#8ab898" stroke-width="1"/>
<rect x="892.500" y="1025.500" width="12" height="13" fill="none" stroke="#2a70d0" stroke-width="2"/><rect x="892.500" y="1039.500" width="12" height="11" fill="none" stroke="#d81868" stroke-width="2"/><path d="M888 1038l21 14M909 1038l-21 14" stroke="#2a7a4a" stroke-width="1.200"/>
<rect x="939.500" y="1039.500" width="12" height="12" fill="none" stroke="#d81868" stroke-width="2"/><rect x="942.500" y="1027.500" width="10" height="9" fill="none" stroke="#7ab0d8" stroke-width="1.400"/><path d="M937 1026l18 10M955 1026l-18 10" stroke="#8ab898" stroke-width="1"/><path d="M947 1036c-2-8-11-8-12 2" stroke="#3a3a9a" stroke-width="2.600" fill="none"/><path d="M930 1037h10l-5 6z" fill="#3a3a9a"/>
<path d="M977 1052v-21l8-6h12M977 1031h12l8-6M989 1031v21M977 1041h12l8-6M985 1025v14" stroke="#5a6a8a" stroke-width="1.800" fill="none"/>
</g>
</svg>
<!-- ===== status bar ===== -->
<div id="status" class="a">
 <div class="a" style="left:0;top:0;width:575px;height:1px;background:#8a8e96"></div>
 
 <div class="a" style="left:81px;top:4px;width:56px;height:19px;background:#fff;border:1px solid #666"></div>
 <div class="a" style="left:166px;top:4px;width:56px;height:19px;background:#fff;border:1px solid #666"></div>
 <div class="a" style="left:142px;top:4px;width:23px;height:19px;background:linear-gradient(#8f939b,#6c7077);border-radius:2px"></div>
 <div class="t" style="left:85px;color:#000">1.</div><div class="t" style="left:170px;color:#000">1.</div>
 <div class="t" style="left:230px">Вуз.: 0 / 783367</div>
 <div class="t" style="left:363px">Ел.: 0 / 849282</div>
 <div class="t" style="left:496px">Зав.: 1 / 130</div>
 <svg class="a" style="left:0;top:1px" width="575" height="24"><path d="M11 9l5-4v2.500c6 0 9 4 8 9h-3c0-3-2-5-5-5v2.500z" fill="#2a9a3a" stroke="#0a4a1a" stroke-width=".6"/><path d="M12 20l10-13" stroke="#e8a020" stroke-width="2"/><text x="21" y="20" font-size="8" font-weight="bold" fill="#222" font-family="Liberation Sans,sans-serif">№</text>
 <path d="M38 17l6-8 6 8z" fill="#3a9a3a" stroke="#1a5a1a" stroke-width=".8"/><path d="M61 9h14l-7 8z" fill="#8a8e96"/>
 <path d="M128 10l3 4 3-4zM213 10l3 4 3-4z" fill="#333"/>
 <path d="M139.500 3v20M225.500 3v20M357.500 3v20M490.500 3v20" stroke="#2a2c30" stroke-width="1.200"/><path d="M140.500 3v20M226.500 3v20M358.500 3v20M491.500 3v20" stroke="#7a7e86" stroke-width=".8"/>
 <path d="M146 21l9-12" stroke="#e8b020" stroke-width="2.200"/><path d="M151 7c3-2 7-2 9 1l-2 1.500c-2-1-4-1-6 0z" fill="#b8bcc4" stroke="#555" stroke-width=".6"/></svg>
</div>
</body></html>
